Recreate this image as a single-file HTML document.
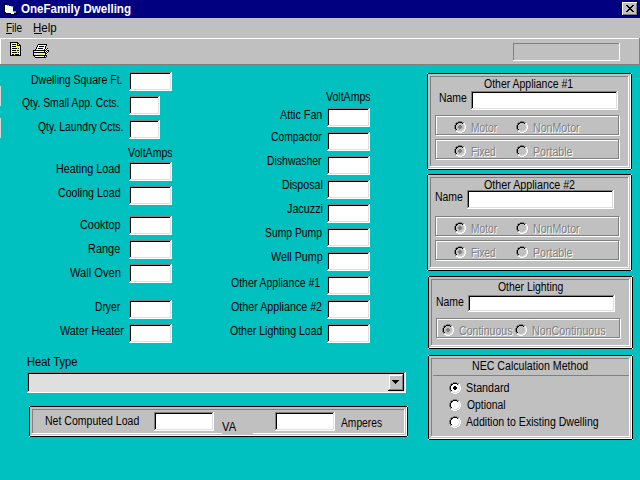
<!DOCTYPE html>
<html><head><meta charset="utf-8"><style>
html,body{margin:0;padding:0;width:640px;height:480px;overflow:hidden;background:#00c0c0}
body>div,body>svg{position:absolute}
</style></head><body>
<div style="left:0px;top:0px;width:640px;height:480px;background:#00c0c0"></div>
<div style="left:0px;top:86px;width:1px;height:20px;background:#d8d8d8"></div><div style="left:0px;top:118px;width:1px;height:20px;background:#d8d8d8"></div>
<div style="left:0px;top:0px;width:640px;height:18px;background:#000080"></div>
<svg style="left:4px;top:4px" width="13" height="11" shape-rendering="crispEdges"><rect x="0" y="0" width="3" height="1" fill="#000"/><rect x="0" y="1" width="1" height="1" fill="#000"/><rect x="1" y="1" width="2" height="1" fill="#fff"/><rect x="3" y="1" width="2" height="1" fill="#00e8e8"/><rect x="5" y="1" width="2" height="1" fill="#000"/><rect x="0" y="2" width="1" height="1" fill="#000"/><rect x="1" y="2" width="6" height="1" fill="#fff"/><rect x="7" y="2" width="2" height="1" fill="#00e8e8"/><rect x="9" y="2" width="1" height="1" fill="#000"/><rect x="0" y="3" width="1" height="1" fill="#000"/><rect x="1" y="3" width="8" height="1" fill="#fff"/><rect x="9" y="3" width="1" height="1" fill="#000"/><rect x="0" y="4" width="1" height="1" fill="#000"/><rect x="1" y="4" width="8" height="1" fill="#fff"/><rect x="9" y="4" width="1" height="1" fill="#000"/><rect x="0" y="5" width="1" height="1" fill="#000"/><rect x="1" y="5" width="8" height="1" fill="#fff"/><rect x="9" y="5" width="1" height="1" fill="#000"/><rect x="0" y="6" width="1" height="1" fill="#000"/><rect x="1" y="6" width="8" height="1" fill="#fff"/><rect x="9" y="6" width="1" height="1" fill="#000"/><rect x="0" y="7" width="1" height="1" fill="#000"/><rect x="1" y="7" width="8" height="1" fill="#fff"/><rect x="9" y="7" width="3" height="1" fill="#a0a0a0"/><rect x="0" y="8" width="2" height="1" fill="#000"/><rect x="2" y="8" width="8" height="1" fill="#fff"/><rect x="10" y="8" width="2" height="1" fill="#a0a0a0"/><rect x="12" y="8" width="1" height="1" fill="#000"/><rect x="2" y="9" width="5" height="1" fill="#000"/><rect x="7" y="9" width="3" height="1" fill="#fff"/><rect x="10" y="9" width="2" height="1" fill="#000"/><rect x="7" y="10" width="3" height="1" fill="#000"/></svg>
<div style="left:622px;top:2px;width:16px;height:14px;background:#c0c0c0"></div><div style="left:622px;top:2px;width:15px;height:1px;background:#fff"></div><div style="left:622px;top:2px;width:1px;height:13px;background:#fff"></div><div style="left:622px;top:15px;width:16px;height:1px;background:#000"></div><div style="left:637px;top:2px;width:1px;height:14px;background:#000"></div><div style="left:623px;top:3px;width:13px;height:1px;background:#c0c0c0"></div><div style="left:623px;top:3px;width:1px;height:11px;background:#c0c0c0"></div><div style="left:623px;top:14px;width:14px;height:1px;background:#808080"></div><div style="left:636px;top:3px;width:1px;height:12px;background:#808080"></div>
<svg style="left:626px;top:5px" width="8" height="7" shape-rendering="crispEdges" fill="#000"><rect x="0" y="0" width="1" height="1"/><rect x="1" y="0" width="1" height="1"/><rect x="6" y="0" width="1" height="1"/><rect x="7" y="0" width="1" height="1"/><rect x="1" y="1" width="1" height="1"/><rect x="2" y="1" width="1" height="1"/><rect x="5" y="1" width="1" height="1"/><rect x="6" y="1" width="1" height="1"/><rect x="2" y="2" width="1" height="1"/><rect x="3" y="2" width="1" height="1"/><rect x="4" y="2" width="1" height="1"/><rect x="5" y="2" width="1" height="1"/><rect x="3" y="3" width="1" height="1"/><rect x="4" y="3" width="1" height="1"/><rect x="2" y="4" width="1" height="1"/><rect x="3" y="4" width="1" height="1"/><rect x="4" y="4" width="1" height="1"/><rect x="5" y="4" width="1" height="1"/><rect x="1" y="5" width="1" height="1"/><rect x="2" y="5" width="1" height="1"/><rect x="5" y="5" width="1" height="1"/><rect x="6" y="5" width="1" height="1"/><rect x="0" y="6" width="1" height="1"/><rect x="1" y="6" width="1" height="1"/><rect x="6" y="6" width="1" height="1"/><rect x="7" y="6" width="1" height="1"/></svg>
<div style="left:0px;top:18px;width:640px;height:20px;background:#c0c0c0"></div>
<div style="left:6px;top:33px;width:6px;height:1px;background:#000"></div>
<div style="left:34px;top:33px;width:8px;height:1px;background:#000"></div>
<div style="left:0px;top:38px;width:640px;height:27px;background:#c0c0c0"></div>
<div style="left:0px;top:38px;width:639px;height:1px;background:#fff"></div>
<div style="left:0px;top:38px;width:1px;height:26px;background:#fff"></div>
<div style="left:0px;top:64px;width:640px;height:1px;background:#808080"></div>
<div style="left:639px;top:38px;width:1px;height:27px;background:#808080"></div>
<div style="left:513px;top:43px;width:106px;height:1px;background:#808080"></div><div style="left:513px;top:43px;width:1px;height:17px;background:#808080"></div><div style="left:513px;top:60px;width:107px;height:1px;background:#fff"></div><div style="left:619px;top:43px;width:1px;height:18px;background:#fff"></div>
<svg style="left:10px;top:42px" width="11" height="14" shape-rendering="crispEdges"><rect x="0" y="0" width="8" height="1" fill="#000"/><rect x="0" y="1" width="1" height="1" fill="#000"/><rect x="1" y="1" width="1" height="1" fill="#ff0"/><rect x="2" y="1" width="1" height="1" fill="#fff"/><rect x="3" y="1" width="1" height="1" fill="#ff0"/><rect x="4" y="1" width="1" height="1" fill="#fff"/><rect x="5" y="1" width="1" height="1" fill="#ff0"/><rect x="6" y="1" width="1" height="1" fill="#fff"/><rect x="7" y="1" width="2" height="1" fill="#000"/><rect x="0" y="2" width="1" height="1" fill="#000"/><rect x="1" y="2" width="1" height="1" fill="#fff"/><rect x="2" y="2" width="4" height="1" fill="#000"/><rect x="6" y="2" width="1" height="1" fill="#ff0"/><rect x="7" y="2" width="1" height="1" fill="#000"/><rect x="8" y="2" width="1" height="1" fill="#fff"/><rect x="9" y="2" width="1" height="1" fill="#000"/><rect x="0" y="3" width="1" height="1" fill="#000"/><rect x="1" y="3" width="1" height="1" fill="#ff0"/><rect x="2" y="3" width="1" height="1" fill="#fff"/><rect x="3" y="3" width="1" height="1" fill="#ff0"/><rect x="4" y="3" width="1" height="1" fill="#fff"/><rect x="5" y="3" width="1" height="1" fill="#ff0"/><rect x="6" y="3" width="1" height="1" fill="#fff"/><rect x="7" y="3" width="4" height="1" fill="#000"/><rect x="0" y="4" width="1" height="1" fill="#000"/><rect x="1" y="4" width="1" height="1" fill="#fff"/><rect x="2" y="4" width="4" height="1" fill="#000"/><rect x="6" y="4" width="1" height="1" fill="#ff0"/><rect x="7" y="4" width="1" height="1" fill="#fff"/><rect x="8" y="4" width="1" height="1" fill="#ff0"/><rect x="9" y="4" width="1" height="1" fill="#fff"/><rect x="10" y="4" width="1" height="1" fill="#000"/><rect x="0" y="5" width="1" height="1" fill="#000"/><rect x="1" y="5" width="1" height="1" fill="#ff0"/><rect x="2" y="5" width="1" height="1" fill="#fff"/><rect x="3" y="5" width="1" height="1" fill="#ff0"/><rect x="4" y="5" width="1" height="1" fill="#fff"/><rect x="5" y="5" width="1" height="1" fill="#ff0"/><rect x="6" y="5" width="1" height="1" fill="#fff"/><rect x="7" y="5" width="1" height="1" fill="#ff0"/><rect x="8" y="5" width="1" height="1" fill="#fff"/><rect x="9" y="5" width="1" height="1" fill="#ff0"/><rect x="10" y="5" width="1" height="1" fill="#000"/><rect x="0" y="6" width="1" height="1" fill="#000"/><rect x="1" y="6" width="1" height="1" fill="#fff"/><rect x="2" y="6" width="5" height="1" fill="#000"/><rect x="7" y="6" width="1" height="1" fill="#ff0"/><rect x="8" y="6" width="1" height="1" fill="#000"/><rect x="9" y="6" width="1" height="1" fill="#fff"/><rect x="10" y="6" width="1" height="1" fill="#000"/><rect x="0" y="7" width="1" height="1" fill="#000"/><rect x="1" y="7" width="1" height="1" fill="#ff0"/><rect x="2" y="7" width="1" height="1" fill="#fff"/><rect x="3" y="7" width="1" height="1" fill="#ff0"/><rect x="4" y="7" width="1" height="1" fill="#fff"/><rect x="5" y="7" width="1" height="1" fill="#ff0"/><rect x="6" y="7" width="1" height="1" fill="#fff"/><rect x="7" y="7" width="1" height="1" fill="#ff0"/><rect x="8" y="7" width="1" height="1" fill="#fff"/><rect x="9" y="7" width="1" height="1" fill="#ff0"/><rect x="10" y="7" width="1" height="1" fill="#000"/><rect x="0" y="8" width="1" height="1" fill="#000"/><rect x="1" y="8" width="1" height="1" fill="#fff"/><rect x="2" y="8" width="4" height="1" fill="#000"/><rect x="6" y="8" width="1" height="1" fill="#ff0"/><rect x="7" y="8" width="2" height="1" fill="#000"/><rect x="9" y="8" width="1" height="1" fill="#fff"/><rect x="10" y="8" width="1" height="1" fill="#000"/><rect x="0" y="9" width="1" height="1" fill="#000"/><rect x="1" y="9" width="1" height="1" fill="#ff0"/><rect x="2" y="9" width="1" height="1" fill="#fff"/><rect x="3" y="9" width="1" height="1" fill="#ff0"/><rect x="4" y="9" width="1" height="1" fill="#fff"/><rect x="5" y="9" width="1" height="1" fill="#ff0"/><rect x="6" y="9" width="1" height="1" fill="#fff"/><rect x="7" y="9" width="1" height="1" fill="#ff0"/><rect x="8" y="9" width="1" height="1" fill="#fff"/><rect x="9" y="9" width="1" height="1" fill="#ff0"/><rect x="10" y="9" width="1" height="1" fill="#000"/><rect x="0" y="10" width="1" height="1" fill="#000"/><rect x="1" y="10" width="1" height="1" fill="#fff"/><rect x="2" y="10" width="5" height="1" fill="#000"/><rect x="7" y="10" width="1" height="1" fill="#ff0"/><rect x="8" y="10" width="1" height="1" fill="#000"/><rect x="9" y="10" width="1" height="1" fill="#fff"/><rect x="10" y="10" width="1" height="1" fill="#000"/><rect x="0" y="11" width="1" height="1" fill="#000"/><rect x="1" y="11" width="1" height="1" fill="#ff0"/><rect x="2" y="11" width="1" height="1" fill="#fff"/><rect x="3" y="11" width="1" height="1" fill="#ff0"/><rect x="4" y="11" width="1" height="1" fill="#fff"/><rect x="5" y="11" width="1" height="1" fill="#ff0"/><rect x="6" y="11" width="1" height="1" fill="#fff"/><rect x="7" y="11" width="1" height="1" fill="#ff0"/><rect x="8" y="11" width="1" height="1" fill="#fff"/><rect x="9" y="11" width="1" height="1" fill="#ff0"/><rect x="10" y="11" width="1" height="1" fill="#000"/><rect x="0" y="12" width="1" height="1" fill="#000"/><rect x="1" y="12" width="1" height="1" fill="#fff"/><rect x="2" y="12" width="2" height="1" fill="#000"/><rect x="4" y="12" width="1" height="1" fill="#ff0"/><rect x="5" y="12" width="4" height="1" fill="#000"/><rect x="9" y="12" width="1" height="1" fill="#fff"/><rect x="10" y="12" width="1" height="1" fill="#000"/><rect x="0" y="13" width="11" height="1" fill="#000"/></svg>
<svg style="left:33px;top:44px" width="16" height="14" shape-rendering="crispEdges"><rect x="5" y="0" width="9" height="1" fill="#000"/><rect x="4" y="1" width="1" height="1" fill="#000"/><rect x="5" y="1" width="8" height="1" fill="#fff"/><rect x="13" y="1" width="1" height="1" fill="#000"/><rect x="4" y="2" width="1" height="1" fill="#000"/><rect x="5" y="2" width="1" height="1" fill="#fff"/><rect x="6" y="2" width="5" height="1" fill="#000"/><rect x="11" y="2" width="1" height="1" fill="#fff"/><rect x="12" y="2" width="1" height="1" fill="#000"/><rect x="3" y="3" width="1" height="1" fill="#000"/><rect x="4" y="3" width="8" height="1" fill="#fff"/><rect x="12" y="3" width="1" height="1" fill="#000"/><rect x="3" y="4" width="1" height="1" fill="#000"/><rect x="4" y="4" width="1" height="1" fill="#fff"/><rect x="5" y="4" width="5" height="1" fill="#000"/><rect x="10" y="4" width="2" height="1" fill="#fff"/><rect x="12" y="4" width="1" height="1" fill="#000"/><rect x="13" y="4" width="1" height="1" fill="#fff"/><rect x="14" y="4" width="1" height="1" fill="#000"/><rect x="2" y="5" width="1" height="1" fill="#000"/><rect x="3" y="5" width="8" height="1" fill="#fff"/><rect x="11" y="5" width="1" height="1" fill="#000"/><rect x="12" y="5" width="1" height="1" fill="#fff"/><rect x="13" y="5" width="1" height="1" fill="#000"/><rect x="14" y="5" width="1" height="1" fill="#fff"/><rect x="0" y="6" width="13" height="1" fill="#000"/><rect x="13" y="6" width="1" height="1" fill="#fff"/><rect x="14" y="6" width="2" height="1" fill="#000"/><rect x="0" y="7" width="1" height="1" fill="#000"/><rect x="1" y="7" width="10" height="1" fill="#fff"/><rect x="11" y="7" width="1" height="1" fill="#000"/><rect x="12" y="7" width="1" height="1" fill="#fff"/><rect x="13" y="7" width="1" height="1" fill="#000"/><rect x="14" y="7" width="1" height="1" fill="#fff"/><rect x="15" y="7" width="1" height="1" fill="#000"/><rect x="0" y="8" width="13" height="1" fill="#000"/><rect x="13" y="8" width="1" height="1" fill="#fff"/><rect x="14" y="8" width="1" height="1" fill="#000"/><rect x="0" y="9" width="1" height="1" fill="#000"/><rect x="1" y="9" width="10" height="1" fill="#e0e0e0"/><rect x="11" y="9" width="1" height="1" fill="#fff"/><rect x="12" y="9" width="2" height="1" fill="#000"/><rect x="14" y="9" width="1" height="1" fill="#fff"/><rect x="0" y="10" width="1" height="1" fill="#000"/><rect x="1" y="10" width="6" height="1" fill="#e0e0e0"/><rect x="7" y="10" width="3" height="1" fill="#ff0"/><rect x="10" y="10" width="1" height="1" fill="#e0e0e0"/><rect x="11" y="10" width="1" height="1" fill="#fff"/><rect x="12" y="10" width="1" height="1" fill="#000"/><rect x="13" y="10" width="1" height="1" fill="#fff"/><rect x="0" y="11" width="14" height="1" fill="#000"/><rect x="1" y="12" width="1" height="1" fill="#000"/><rect x="2" y="12" width="9" height="1" fill="#fff"/><rect x="11" y="12" width="1" height="1" fill="#000"/><rect x="12" y="12" width="1" height="1" fill="#fff"/><rect x="13" y="12" width="1" height="1" fill="#000"/><rect x="2" y="13" width="11" height="1" fill="#000"/></svg>
<div style="left:129px;top:72px;width:43px;height:19px;background:#fff"></div><div style="left:129px;top:72px;width:42px;height:1px;background:#808080"></div><div style="left:129px;top:72px;width:1px;height:18px;background:#808080"></div><div style="left:129px;top:90px;width:43px;height:1px;background:#fff"></div><div style="left:171px;top:72px;width:1px;height:19px;background:#fff"></div><div style="left:130px;top:73px;width:40px;height:1px;background:#000"></div><div style="left:130px;top:73px;width:1px;height:16px;background:#000"></div><div style="left:130px;top:89px;width:41px;height:1px;background:#dfdfdf"></div><div style="left:170px;top:73px;width:1px;height:17px;background:#dfdfdf"></div>
<div style="left:129px;top:96px;width:31px;height:19px;background:#fff"></div><div style="left:129px;top:96px;width:30px;height:1px;background:#808080"></div><div style="left:129px;top:96px;width:1px;height:18px;background:#808080"></div><div style="left:129px;top:114px;width:31px;height:1px;background:#fff"></div><div style="left:159px;top:96px;width:1px;height:19px;background:#fff"></div><div style="left:130px;top:97px;width:28px;height:1px;background:#000"></div><div style="left:130px;top:97px;width:1px;height:16px;background:#000"></div><div style="left:130px;top:113px;width:29px;height:1px;background:#dfdfdf"></div><div style="left:158px;top:97px;width:1px;height:17px;background:#dfdfdf"></div>
<div style="left:129px;top:120px;width:31px;height:19px;background:#fff"></div><div style="left:129px;top:120px;width:30px;height:1px;background:#808080"></div><div style="left:129px;top:120px;width:1px;height:18px;background:#808080"></div><div style="left:129px;top:138px;width:31px;height:1px;background:#fff"></div><div style="left:159px;top:120px;width:1px;height:19px;background:#fff"></div><div style="left:130px;top:121px;width:28px;height:1px;background:#000"></div><div style="left:130px;top:121px;width:1px;height:16px;background:#000"></div><div style="left:130px;top:137px;width:29px;height:1px;background:#dfdfdf"></div><div style="left:158px;top:121px;width:1px;height:17px;background:#dfdfdf"></div>
<div style="left:129px;top:162px;width:43px;height:19px;background:#fff"></div><div style="left:129px;top:162px;width:42px;height:1px;background:#808080"></div><div style="left:129px;top:162px;width:1px;height:18px;background:#808080"></div><div style="left:129px;top:180px;width:43px;height:1px;background:#fff"></div><div style="left:171px;top:162px;width:1px;height:19px;background:#fff"></div><div style="left:130px;top:163px;width:40px;height:1px;background:#000"></div><div style="left:130px;top:163px;width:1px;height:16px;background:#000"></div><div style="left:130px;top:179px;width:41px;height:1px;background:#dfdfdf"></div><div style="left:170px;top:163px;width:1px;height:17px;background:#dfdfdf"></div>
<div style="left:129px;top:186px;width:43px;height:19px;background:#fff"></div><div style="left:129px;top:186px;width:42px;height:1px;background:#808080"></div><div style="left:129px;top:186px;width:1px;height:18px;background:#808080"></div><div style="left:129px;top:204px;width:43px;height:1px;background:#fff"></div><div style="left:171px;top:186px;width:1px;height:19px;background:#fff"></div><div style="left:130px;top:187px;width:40px;height:1px;background:#000"></div><div style="left:130px;top:187px;width:1px;height:16px;background:#000"></div><div style="left:130px;top:203px;width:41px;height:1px;background:#dfdfdf"></div><div style="left:170px;top:187px;width:1px;height:17px;background:#dfdfdf"></div>
<div style="left:129px;top:216px;width:43px;height:19px;background:#fff"></div><div style="left:129px;top:216px;width:42px;height:1px;background:#808080"></div><div style="left:129px;top:216px;width:1px;height:18px;background:#808080"></div><div style="left:129px;top:234px;width:43px;height:1px;background:#fff"></div><div style="left:171px;top:216px;width:1px;height:19px;background:#fff"></div><div style="left:130px;top:217px;width:40px;height:1px;background:#000"></div><div style="left:130px;top:217px;width:1px;height:16px;background:#000"></div><div style="left:130px;top:233px;width:41px;height:1px;background:#dfdfdf"></div><div style="left:170px;top:217px;width:1px;height:17px;background:#dfdfdf"></div>
<div style="left:129px;top:240px;width:43px;height:19px;background:#fff"></div><div style="left:129px;top:240px;width:42px;height:1px;background:#808080"></div><div style="left:129px;top:240px;width:1px;height:18px;background:#808080"></div><div style="left:129px;top:258px;width:43px;height:1px;background:#fff"></div><div style="left:171px;top:240px;width:1px;height:19px;background:#fff"></div><div style="left:130px;top:241px;width:40px;height:1px;background:#000"></div><div style="left:130px;top:241px;width:1px;height:16px;background:#000"></div><div style="left:130px;top:257px;width:41px;height:1px;background:#dfdfdf"></div><div style="left:170px;top:241px;width:1px;height:17px;background:#dfdfdf"></div>
<div style="left:129px;top:264px;width:43px;height:19px;background:#fff"></div><div style="left:129px;top:264px;width:42px;height:1px;background:#808080"></div><div style="left:129px;top:264px;width:1px;height:18px;background:#808080"></div><div style="left:129px;top:282px;width:43px;height:1px;background:#fff"></div><div style="left:171px;top:264px;width:1px;height:19px;background:#fff"></div><div style="left:130px;top:265px;width:40px;height:1px;background:#000"></div><div style="left:130px;top:265px;width:1px;height:16px;background:#000"></div><div style="left:130px;top:281px;width:41px;height:1px;background:#dfdfdf"></div><div style="left:170px;top:265px;width:1px;height:17px;background:#dfdfdf"></div>
<div style="left:129px;top:300px;width:43px;height:19px;background:#fff"></div><div style="left:129px;top:300px;width:42px;height:1px;background:#808080"></div><div style="left:129px;top:300px;width:1px;height:18px;background:#808080"></div><div style="left:129px;top:318px;width:43px;height:1px;background:#fff"></div><div style="left:171px;top:300px;width:1px;height:19px;background:#fff"></div><div style="left:130px;top:301px;width:40px;height:1px;background:#000"></div><div style="left:130px;top:301px;width:1px;height:16px;background:#000"></div><div style="left:130px;top:317px;width:41px;height:1px;background:#dfdfdf"></div><div style="left:170px;top:301px;width:1px;height:17px;background:#dfdfdf"></div>
<div style="left:129px;top:324px;width:43px;height:19px;background:#fff"></div><div style="left:129px;top:324px;width:42px;height:1px;background:#808080"></div><div style="left:129px;top:324px;width:1px;height:18px;background:#808080"></div><div style="left:129px;top:342px;width:43px;height:1px;background:#fff"></div><div style="left:171px;top:324px;width:1px;height:19px;background:#fff"></div><div style="left:130px;top:325px;width:40px;height:1px;background:#000"></div><div style="left:130px;top:325px;width:1px;height:16px;background:#000"></div><div style="left:130px;top:341px;width:41px;height:1px;background:#dfdfdf"></div><div style="left:170px;top:325px;width:1px;height:17px;background:#dfdfdf"></div>
<div style="left:327px;top:108px;width:43px;height:19px;background:#fff"></div><div style="left:327px;top:108px;width:42px;height:1px;background:#808080"></div><div style="left:327px;top:108px;width:1px;height:18px;background:#808080"></div><div style="left:327px;top:126px;width:43px;height:1px;background:#fff"></div><div style="left:369px;top:108px;width:1px;height:19px;background:#fff"></div><div style="left:328px;top:109px;width:40px;height:1px;background:#000"></div><div style="left:328px;top:109px;width:1px;height:16px;background:#000"></div><div style="left:328px;top:125px;width:41px;height:1px;background:#dfdfdf"></div><div style="left:368px;top:109px;width:1px;height:17px;background:#dfdfdf"></div>
<div style="left:327px;top:132px;width:43px;height:19px;background:#fff"></div><div style="left:327px;top:132px;width:42px;height:1px;background:#808080"></div><div style="left:327px;top:132px;width:1px;height:18px;background:#808080"></div><div style="left:327px;top:150px;width:43px;height:1px;background:#fff"></div><div style="left:369px;top:132px;width:1px;height:19px;background:#fff"></div><div style="left:328px;top:133px;width:40px;height:1px;background:#000"></div><div style="left:328px;top:133px;width:1px;height:16px;background:#000"></div><div style="left:328px;top:149px;width:41px;height:1px;background:#dfdfdf"></div><div style="left:368px;top:133px;width:1px;height:17px;background:#dfdfdf"></div>
<div style="left:327px;top:156px;width:43px;height:19px;background:#fff"></div><div style="left:327px;top:156px;width:42px;height:1px;background:#808080"></div><div style="left:327px;top:156px;width:1px;height:18px;background:#808080"></div><div style="left:327px;top:174px;width:43px;height:1px;background:#fff"></div><div style="left:369px;top:156px;width:1px;height:19px;background:#fff"></div><div style="left:328px;top:157px;width:40px;height:1px;background:#000"></div><div style="left:328px;top:157px;width:1px;height:16px;background:#000"></div><div style="left:328px;top:173px;width:41px;height:1px;background:#dfdfdf"></div><div style="left:368px;top:157px;width:1px;height:17px;background:#dfdfdf"></div>
<div style="left:327px;top:180px;width:43px;height:19px;background:#fff"></div><div style="left:327px;top:180px;width:42px;height:1px;background:#808080"></div><div style="left:327px;top:180px;width:1px;height:18px;background:#808080"></div><div style="left:327px;top:198px;width:43px;height:1px;background:#fff"></div><div style="left:369px;top:180px;width:1px;height:19px;background:#fff"></div><div style="left:328px;top:181px;width:40px;height:1px;background:#000"></div><div style="left:328px;top:181px;width:1px;height:16px;background:#000"></div><div style="left:328px;top:197px;width:41px;height:1px;background:#dfdfdf"></div><div style="left:368px;top:181px;width:1px;height:17px;background:#dfdfdf"></div>
<div style="left:327px;top:204px;width:43px;height:19px;background:#fff"></div><div style="left:327px;top:204px;width:42px;height:1px;background:#808080"></div><div style="left:327px;top:204px;width:1px;height:18px;background:#808080"></div><div style="left:327px;top:222px;width:43px;height:1px;background:#fff"></div><div style="left:369px;top:204px;width:1px;height:19px;background:#fff"></div><div style="left:328px;top:205px;width:40px;height:1px;background:#000"></div><div style="left:328px;top:205px;width:1px;height:16px;background:#000"></div><div style="left:328px;top:221px;width:41px;height:1px;background:#dfdfdf"></div><div style="left:368px;top:205px;width:1px;height:17px;background:#dfdfdf"></div>
<div style="left:327px;top:228px;width:43px;height:19px;background:#fff"></div><div style="left:327px;top:228px;width:42px;height:1px;background:#808080"></div><div style="left:327px;top:228px;width:1px;height:18px;background:#808080"></div><div style="left:327px;top:246px;width:43px;height:1px;background:#fff"></div><div style="left:369px;top:228px;width:1px;height:19px;background:#fff"></div><div style="left:328px;top:229px;width:40px;height:1px;background:#000"></div><div style="left:328px;top:229px;width:1px;height:16px;background:#000"></div><div style="left:328px;top:245px;width:41px;height:1px;background:#dfdfdf"></div><div style="left:368px;top:229px;width:1px;height:17px;background:#dfdfdf"></div>
<div style="left:327px;top:252px;width:43px;height:19px;background:#fff"></div><div style="left:327px;top:252px;width:42px;height:1px;background:#808080"></div><div style="left:327px;top:252px;width:1px;height:18px;background:#808080"></div><div style="left:327px;top:270px;width:43px;height:1px;background:#fff"></div><div style="left:369px;top:252px;width:1px;height:19px;background:#fff"></div><div style="left:328px;top:253px;width:40px;height:1px;background:#000"></div><div style="left:328px;top:253px;width:1px;height:16px;background:#000"></div><div style="left:328px;top:269px;width:41px;height:1px;background:#dfdfdf"></div><div style="left:368px;top:253px;width:1px;height:17px;background:#dfdfdf"></div>
<div style="left:327px;top:276px;width:43px;height:19px;background:#fff"></div><div style="left:327px;top:276px;width:42px;height:1px;background:#808080"></div><div style="left:327px;top:276px;width:1px;height:18px;background:#808080"></div><div style="left:327px;top:294px;width:43px;height:1px;background:#fff"></div><div style="left:369px;top:276px;width:1px;height:19px;background:#fff"></div><div style="left:328px;top:277px;width:40px;height:1px;background:#000"></div><div style="left:328px;top:277px;width:1px;height:16px;background:#000"></div><div style="left:328px;top:293px;width:41px;height:1px;background:#dfdfdf"></div><div style="left:368px;top:277px;width:1px;height:17px;background:#dfdfdf"></div>
<div style="left:327px;top:300px;width:43px;height:19px;background:#fff"></div><div style="left:327px;top:300px;width:42px;height:1px;background:#808080"></div><div style="left:327px;top:300px;width:1px;height:18px;background:#808080"></div><div style="left:327px;top:318px;width:43px;height:1px;background:#fff"></div><div style="left:369px;top:300px;width:1px;height:19px;background:#fff"></div><div style="left:328px;top:301px;width:40px;height:1px;background:#000"></div><div style="left:328px;top:301px;width:1px;height:16px;background:#000"></div><div style="left:328px;top:317px;width:41px;height:1px;background:#dfdfdf"></div><div style="left:368px;top:301px;width:1px;height:17px;background:#dfdfdf"></div>
<div style="left:327px;top:324px;width:43px;height:19px;background:#fff"></div><div style="left:327px;top:324px;width:42px;height:1px;background:#808080"></div><div style="left:327px;top:324px;width:1px;height:18px;background:#808080"></div><div style="left:327px;top:342px;width:43px;height:1px;background:#fff"></div><div style="left:369px;top:324px;width:1px;height:19px;background:#fff"></div><div style="left:328px;top:325px;width:40px;height:1px;background:#000"></div><div style="left:328px;top:325px;width:1px;height:16px;background:#000"></div><div style="left:328px;top:341px;width:41px;height:1px;background:#dfdfdf"></div><div style="left:368px;top:325px;width:1px;height:17px;background:#dfdfdf"></div>
<div style="left:27px;top:372px;width:379px;height:21px;background:#dfdfdf"></div><div style="left:27px;top:372px;width:378px;height:1px;background:#808080"></div><div style="left:27px;top:372px;width:1px;height:20px;background:#808080"></div><div style="left:27px;top:392px;width:379px;height:1px;background:#fff"></div><div style="left:405px;top:372px;width:1px;height:21px;background:#fff"></div><div style="left:28px;top:373px;width:376px;height:1px;background:#000"></div><div style="left:28px;top:373px;width:1px;height:18px;background:#000"></div><div style="left:28px;top:391px;width:377px;height:1px;background:#dfdfdf"></div><div style="left:404px;top:373px;width:1px;height:19px;background:#dfdfdf"></div>
<div style="left:388px;top:374px;width:16px;height:17px;background:#c0c0c0"></div><div style="left:388px;top:374px;width:15px;height:1px;background:#dfdfdf"></div><div style="left:388px;top:374px;width:1px;height:16px;background:#dfdfdf"></div><div style="left:388px;top:390px;width:16px;height:1px;background:#000"></div><div style="left:403px;top:374px;width:1px;height:17px;background:#000"></div><div style="left:389px;top:375px;width:13px;height:1px;background:#fff"></div><div style="left:389px;top:375px;width:1px;height:14px;background:#fff"></div><div style="left:389px;top:389px;width:14px;height:1px;background:#808080"></div><div style="left:402px;top:375px;width:1px;height:15px;background:#808080"></div>
<div style="left:392px;top:380px;width:7px;height:1px;background:#000"></div><div style="left:393px;top:381px;width:5px;height:1px;background:#000"></div><div style="left:394px;top:382px;width:3px;height:1px;background:#000"></div><div style="left:395px;top:383px;width:1px;height:1px;background:#000"></div>
<div style="left:29px;top:406px;width:379px;height:31px;background:#c0c0c0"></div><div style="left:29px;top:406px;width:378px;height:1px;background:#000"></div><div style="left:29px;top:406px;width:1px;height:30px;background:#000"></div><div style="left:29px;top:436px;width:379px;height:1px;background:#000"></div><div style="left:407px;top:406px;width:1px;height:31px;background:#000"></div><div style="left:30px;top:407px;width:376px;height:1px;background:#c0c0c0"></div><div style="left:30px;top:407px;width:1px;height:28px;background:#c0c0c0"></div><div style="left:30px;top:435px;width:377px;height:1px;background:#fff"></div><div style="left:406px;top:407px;width:1px;height:29px;background:#fff"></div><div style="left:32px;top:409px;width:372px;height:1px;background:#808080"></div><div style="left:32px;top:409px;width:1px;height:24px;background:#808080"></div><div style="left:32px;top:433px;width:373px;height:1px;background:#fff"></div><div style="left:404px;top:409px;width:1px;height:25px;background:#fff"></div><div style="left:29px;top:406px;width:1px;height:1px;background:#e8e8e8"></div><div style="left:407px;top:406px;width:1px;height:1px;background:#e8e8e8"></div><div style="left:29px;top:436px;width:1px;height:1px;background:#e8e8e8"></div><div style="left:407px;top:436px;width:1px;height:1px;background:#e8e8e8"></div>
<div style="left:154px;top:412px;width:60px;height:19px;background:#fff"></div><div style="left:154px;top:412px;width:59px;height:1px;background:#808080"></div><div style="left:154px;top:412px;width:1px;height:18px;background:#808080"></div><div style="left:154px;top:430px;width:60px;height:1px;background:#fff"></div><div style="left:213px;top:412px;width:1px;height:19px;background:#fff"></div><div style="left:155px;top:413px;width:57px;height:1px;background:#000"></div><div style="left:155px;top:413px;width:1px;height:16px;background:#000"></div><div style="left:155px;top:429px;width:58px;height:1px;background:#dfdfdf"></div><div style="left:212px;top:413px;width:1px;height:17px;background:#dfdfdf"></div>
<div style="left:275px;top:412px;width:60px;height:19px;background:#fff"></div><div style="left:275px;top:412px;width:59px;height:1px;background:#808080"></div><div style="left:275px;top:412px;width:1px;height:18px;background:#808080"></div><div style="left:275px;top:430px;width:60px;height:1px;background:#fff"></div><div style="left:334px;top:412px;width:1px;height:19px;background:#fff"></div><div style="left:276px;top:413px;width:57px;height:1px;background:#000"></div><div style="left:276px;top:413px;width:1px;height:16px;background:#000"></div><div style="left:276px;top:429px;width:58px;height:1px;background:#dfdfdf"></div><div style="left:333px;top:413px;width:1px;height:17px;background:#dfdfdf"></div>
<div style="left:222px;top:420px;width:31px;height:14px;background:#c0c0c0"></div>
<div style="left:427px;top:73px;width:205px;height:97px;background:#c0c0c0"></div><div style="left:427px;top:73px;width:204px;height:1px;background:#000"></div><div style="left:427px;top:73px;width:1px;height:96px;background:#000"></div><div style="left:427px;top:169px;width:205px;height:1px;background:#000"></div><div style="left:631px;top:73px;width:1px;height:97px;background:#000"></div><div style="left:428px;top:74px;width:202px;height:1px;background:#c0c0c0"></div><div style="left:428px;top:74px;width:1px;height:94px;background:#c0c0c0"></div><div style="left:428px;top:168px;width:203px;height:1px;background:#fff"></div><div style="left:630px;top:74px;width:1px;height:95px;background:#fff"></div><div style="left:430px;top:76px;width:198px;height:1px;background:#808080"></div><div style="left:430px;top:76px;width:1px;height:90px;background:#808080"></div><div style="left:430px;top:166px;width:199px;height:1px;background:#fff"></div><div style="left:628px;top:76px;width:1px;height:91px;background:#fff"></div><div style="left:427px;top:73px;width:1px;height:1px;background:#e8e8e8"></div><div style="left:631px;top:73px;width:1px;height:1px;background:#e8e8e8"></div><div style="left:427px;top:169px;width:1px;height:1px;background:#e8e8e8"></div><div style="left:631px;top:169px;width:1px;height:1px;background:#e8e8e8"></div>
<div style="left:471px;top:91px;width:147px;height:19px;background:#fff"></div><div style="left:471px;top:91px;width:146px;height:1px;background:#808080"></div><div style="left:471px;top:91px;width:1px;height:18px;background:#808080"></div><div style="left:471px;top:109px;width:147px;height:1px;background:#fff"></div><div style="left:617px;top:91px;width:1px;height:19px;background:#fff"></div><div style="left:472px;top:92px;width:144px;height:1px;background:#000"></div><div style="left:472px;top:92px;width:1px;height:16px;background:#000"></div><div style="left:472px;top:108px;width:145px;height:1px;background:#dfdfdf"></div><div style="left:616px;top:92px;width:1px;height:17px;background:#dfdfdf"></div>
<div style="left:436px;top:116px;width:184px;height:1px;background:#fff"></div><div style="left:436px;top:135px;width:184px;height:1px;background:#fff"></div><div style="left:436px;top:116px;width:1px;height:20px;background:#fff"></div><div style="left:619px;top:116px;width:1px;height:20px;background:#fff"></div><div style="left:435px;top:115px;width:184px;height:1px;background:#808080"></div><div style="left:435px;top:134px;width:184px;height:1px;background:#808080"></div><div style="left:435px;top:115px;width:1px;height:20px;background:#808080"></div><div style="left:618px;top:115px;width:1px;height:20px;background:#808080"></div>
<div style="left:436px;top:140px;width:184px;height:1px;background:#fff"></div><div style="left:436px;top:159px;width:184px;height:1px;background:#fff"></div><div style="left:436px;top:140px;width:1px;height:20px;background:#fff"></div><div style="left:619px;top:140px;width:1px;height:20px;background:#fff"></div><div style="left:435px;top:139px;width:184px;height:1px;background:#808080"></div><div style="left:435px;top:158px;width:184px;height:1px;background:#808080"></div><div style="left:435px;top:139px;width:1px;height:20px;background:#808080"></div><div style="left:618px;top:139px;width:1px;height:20px;background:#808080"></div>
<svg style="left:454px;top:121px" width="12" height="12" shape-rendering="crispEdges"><rect x="4" y="0" width="4" height="1" fill="#808080"/><rect x="2" y="1" width="2" height="1" fill="#808080"/><rect x="4" y="1" width="4" height="1" fill="#000"/><rect x="8" y="1" width="2" height="1" fill="#808080"/><rect x="1" y="2" width="1" height="1" fill="#808080"/><rect x="2" y="2" width="2" height="1" fill="#000"/><rect x="4" y="2" width="4" height="1" fill="#c0c0c0"/><rect x="8" y="2" width="1" height="1" fill="#000"/><rect x="9" y="2" width="1" height="1" fill="#dfdfdf"/><rect x="10" y="2" width="1" height="1" fill="#fff"/><rect x="1" y="3" width="1" height="1" fill="#808080"/><rect x="2" y="3" width="1" height="1" fill="#000"/><rect x="3" y="3" width="6" height="1" fill="#c0c0c0"/><rect x="9" y="3" width="1" height="1" fill="#dfdfdf"/><rect x="10" y="3" width="1" height="1" fill="#fff"/><rect x="0" y="4" width="1" height="1" fill="#808080"/><rect x="1" y="4" width="1" height="1" fill="#000"/><rect x="2" y="4" width="3" height="1" fill="#c0c0c0"/><rect x="5" y="4" width="2" height="1" fill="#808080"/><rect x="7" y="4" width="3" height="1" fill="#c0c0c0"/><rect x="10" y="4" width="1" height="1" fill="#dfdfdf"/><rect x="11" y="4" width="1" height="1" fill="#fff"/><rect x="0" y="5" width="1" height="1" fill="#808080"/><rect x="1" y="5" width="1" height="1" fill="#000"/><rect x="2" y="5" width="2" height="1" fill="#c0c0c0"/><rect x="4" y="5" width="4" height="1" fill="#808080"/><rect x="8" y="5" width="2" height="1" fill="#c0c0c0"/><rect x="10" y="5" width="1" height="1" fill="#dfdfdf"/><rect x="11" y="5" width="1" height="1" fill="#fff"/><rect x="0" y="6" width="1" height="1" fill="#808080"/><rect x="1" y="6" width="1" height="1" fill="#000"/><rect x="2" y="6" width="2" height="1" fill="#c0c0c0"/><rect x="4" y="6" width="4" height="1" fill="#808080"/><rect x="8" y="6" width="2" height="1" fill="#c0c0c0"/><rect x="10" y="6" width="1" height="1" fill="#dfdfdf"/><rect x="11" y="6" width="1" height="1" fill="#fff"/><rect x="0" y="7" width="1" height="1" fill="#808080"/><rect x="1" y="7" width="1" height="1" fill="#000"/><rect x="2" y="7" width="3" height="1" fill="#c0c0c0"/><rect x="5" y="7" width="2" height="1" fill="#808080"/><rect x="7" y="7" width="3" height="1" fill="#c0c0c0"/><rect x="10" y="7" width="1" height="1" fill="#dfdfdf"/><rect x="11" y="7" width="1" height="1" fill="#fff"/><rect x="1" y="8" width="1" height="1" fill="#808080"/><rect x="2" y="8" width="1" height="1" fill="#000"/><rect x="3" y="8" width="6" height="1" fill="#c0c0c0"/><rect x="9" y="8" width="1" height="1" fill="#dfdfdf"/><rect x="10" y="8" width="1" height="1" fill="#fff"/><rect x="1" y="9" width="1" height="1" fill="#808080"/><rect x="2" y="9" width="2" height="1" fill="#dfdfdf"/><rect x="4" y="9" width="4" height="1" fill="#c0c0c0"/><rect x="8" y="9" width="2" height="1" fill="#dfdfdf"/><rect x="10" y="9" width="1" height="1" fill="#fff"/><rect x="2" y="10" width="2" height="1" fill="#fff"/><rect x="4" y="10" width="4" height="1" fill="#dfdfdf"/><rect x="8" y="10" width="2" height="1" fill="#fff"/><rect x="4" y="11" width="4" height="1" fill="#fff"/></svg>
<svg style="left:516px;top:121px" width="12" height="12" shape-rendering="crispEdges"><rect x="4" y="0" width="4" height="1" fill="#808080"/><rect x="2" y="1" width="2" height="1" fill="#808080"/><rect x="4" y="1" width="4" height="1" fill="#000"/><rect x="8" y="1" width="2" height="1" fill="#808080"/><rect x="1" y="2" width="1" height="1" fill="#808080"/><rect x="2" y="2" width="2" height="1" fill="#000"/><rect x="4" y="2" width="4" height="1" fill="#c0c0c0"/><rect x="8" y="2" width="1" height="1" fill="#000"/><rect x="9" y="2" width="1" height="1" fill="#dfdfdf"/><rect x="10" y="2" width="1" height="1" fill="#fff"/><rect x="1" y="3" width="1" height="1" fill="#808080"/><rect x="2" y="3" width="1" height="1" fill="#000"/><rect x="3" y="3" width="6" height="1" fill="#c0c0c0"/><rect x="9" y="3" width="1" height="1" fill="#dfdfdf"/><rect x="10" y="3" width="1" height="1" fill="#fff"/><rect x="0" y="4" width="1" height="1" fill="#808080"/><rect x="1" y="4" width="1" height="1" fill="#000"/><rect x="2" y="4" width="8" height="1" fill="#c0c0c0"/><rect x="10" y="4" width="1" height="1" fill="#dfdfdf"/><rect x="11" y="4" width="1" height="1" fill="#fff"/><rect x="0" y="5" width="1" height="1" fill="#808080"/><rect x="1" y="5" width="1" height="1" fill="#000"/><rect x="2" y="5" width="8" height="1" fill="#c0c0c0"/><rect x="10" y="5" width="1" height="1" fill="#dfdfdf"/><rect x="11" y="5" width="1" height="1" fill="#fff"/><rect x="0" y="6" width="1" height="1" fill="#808080"/><rect x="1" y="6" width="1" height="1" fill="#000"/><rect x="2" y="6" width="8" height="1" fill="#c0c0c0"/><rect x="10" y="6" width="1" height="1" fill="#dfdfdf"/><rect x="11" y="6" width="1" height="1" fill="#fff"/><rect x="0" y="7" width="1" height="1" fill="#808080"/><rect x="1" y="7" width="1" height="1" fill="#000"/><rect x="2" y="7" width="8" height="1" fill="#c0c0c0"/><rect x="10" y="7" width="1" height="1" fill="#dfdfdf"/><rect x="11" y="7" width="1" height="1" fill="#fff"/><rect x="1" y="8" width="1" height="1" fill="#808080"/><rect x="2" y="8" width="1" height="1" fill="#000"/><rect x="3" y="8" width="6" height="1" fill="#c0c0c0"/><rect x="9" y="8" width="1" height="1" fill="#dfdfdf"/><rect x="10" y="8" width="1" height="1" fill="#fff"/><rect x="1" y="9" width="1" height="1" fill="#808080"/><rect x="2" y="9" width="2" height="1" fill="#dfdfdf"/><rect x="4" y="9" width="4" height="1" fill="#c0c0c0"/><rect x="8" y="9" width="2" height="1" fill="#dfdfdf"/><rect x="10" y="9" width="1" height="1" fill="#fff"/><rect x="2" y="10" width="2" height="1" fill="#fff"/><rect x="4" y="10" width="4" height="1" fill="#dfdfdf"/><rect x="8" y="10" width="2" height="1" fill="#fff"/><rect x="4" y="11" width="4" height="1" fill="#fff"/></svg>
<svg style="left:454px;top:145px" width="12" height="12" shape-rendering="crispEdges"><rect x="4" y="0" width="4" height="1" fill="#808080"/><rect x="2" y="1" width="2" height="1" fill="#808080"/><rect x="4" y="1" width="4" height="1" fill="#000"/><rect x="8" y="1" width="2" height="1" fill="#808080"/><rect x="1" y="2" width="1" height="1" fill="#808080"/><rect x="2" y="2" width="2" height="1" fill="#000"/><rect x="4" y="2" width="4" height="1" fill="#c0c0c0"/><rect x="8" y="2" width="1" height="1" fill="#000"/><rect x="9" y="2" width="1" height="1" fill="#dfdfdf"/><rect x="10" y="2" width="1" height="1" fill="#fff"/><rect x="1" y="3" width="1" height="1" fill="#808080"/><rect x="2" y="3" width="1" height="1" fill="#000"/><rect x="3" y="3" width="6" height="1" fill="#c0c0c0"/><rect x="9" y="3" width="1" height="1" fill="#dfdfdf"/><rect x="10" y="3" width="1" height="1" fill="#fff"/><rect x="0" y="4" width="1" height="1" fill="#808080"/><rect x="1" y="4" width="1" height="1" fill="#000"/><rect x="2" y="4" width="3" height="1" fill="#c0c0c0"/><rect x="5" y="4" width="2" height="1" fill="#808080"/><rect x="7" y="4" width="3" height="1" fill="#c0c0c0"/><rect x="10" y="4" width="1" height="1" fill="#dfdfdf"/><rect x="11" y="4" width="1" height="1" fill="#fff"/><rect x="0" y="5" width="1" height="1" fill="#808080"/><rect x="1" y="5" width="1" height="1" fill="#000"/><rect x="2" y="5" width="2" height="1" fill="#c0c0c0"/><rect x="4" y="5" width="4" height="1" fill="#808080"/><rect x="8" y="5" width="2" height="1" fill="#c0c0c0"/><rect x="10" y="5" width="1" height="1" fill="#dfdfdf"/><rect x="11" y="5" width="1" height="1" fill="#fff"/><rect x="0" y="6" width="1" height="1" fill="#808080"/><rect x="1" y="6" width="1" height="1" fill="#000"/><rect x="2" y="6" width="2" height="1" fill="#c0c0c0"/><rect x="4" y="6" width="4" height="1" fill="#808080"/><rect x="8" y="6" width="2" height="1" fill="#c0c0c0"/><rect x="10" y="6" width="1" height="1" fill="#dfdfdf"/><rect x="11" y="6" width="1" height="1" fill="#fff"/><rect x="0" y="7" width="1" height="1" fill="#808080"/><rect x="1" y="7" width="1" height="1" fill="#000"/><rect x="2" y="7" width="3" height="1" fill="#c0c0c0"/><rect x="5" y="7" width="2" height="1" fill="#808080"/><rect x="7" y="7" width="3" height="1" fill="#c0c0c0"/><rect x="10" y="7" width="1" height="1" fill="#dfdfdf"/><rect x="11" y="7" width="1" height="1" fill="#fff"/><rect x="1" y="8" width="1" height="1" fill="#808080"/><rect x="2" y="8" width="1" height="1" fill="#000"/><rect x="3" y="8" width="6" height="1" fill="#c0c0c0"/><rect x="9" y="8" width="1" height="1" fill="#dfdfdf"/><rect x="10" y="8" width="1" height="1" fill="#fff"/><rect x="1" y="9" width="1" height="1" fill="#808080"/><rect x="2" y="9" width="2" height="1" fill="#dfdfdf"/><rect x="4" y="9" width="4" height="1" fill="#c0c0c0"/><rect x="8" y="9" width="2" height="1" fill="#dfdfdf"/><rect x="10" y="9" width="1" height="1" fill="#fff"/><rect x="2" y="10" width="2" height="1" fill="#fff"/><rect x="4" y="10" width="4" height="1" fill="#dfdfdf"/><rect x="8" y="10" width="2" height="1" fill="#fff"/><rect x="4" y="11" width="4" height="1" fill="#fff"/></svg>
<svg style="left:516px;top:145px" width="12" height="12" shape-rendering="crispEdges"><rect x="4" y="0" width="4" height="1" fill="#808080"/><rect x="2" y="1" width="2" height="1" fill="#808080"/><rect x="4" y="1" width="4" height="1" fill="#000"/><rect x="8" y="1" width="2" height="1" fill="#808080"/><rect x="1" y="2" width="1" height="1" fill="#808080"/><rect x="2" y="2" width="2" height="1" fill="#000"/><rect x="4" y="2" width="4" height="1" fill="#c0c0c0"/><rect x="8" y="2" width="1" height="1" fill="#000"/><rect x="9" y="2" width="1" height="1" fill="#dfdfdf"/><rect x="10" y="2" width="1" height="1" fill="#fff"/><rect x="1" y="3" width="1" height="1" fill="#808080"/><rect x="2" y="3" width="1" height="1" fill="#000"/><rect x="3" y="3" width="6" height="1" fill="#c0c0c0"/><rect x="9" y="3" width="1" height="1" fill="#dfdfdf"/><rect x="10" y="3" width="1" height="1" fill="#fff"/><rect x="0" y="4" width="1" height="1" fill="#808080"/><rect x="1" y="4" width="1" height="1" fill="#000"/><rect x="2" y="4" width="8" height="1" fill="#c0c0c0"/><rect x="10" y="4" width="1" height="1" fill="#dfdfdf"/><rect x="11" y="4" width="1" height="1" fill="#fff"/><rect x="0" y="5" width="1" height="1" fill="#808080"/><rect x="1" y="5" width="1" height="1" fill="#000"/><rect x="2" y="5" width="8" height="1" fill="#c0c0c0"/><rect x="10" y="5" width="1" height="1" fill="#dfdfdf"/><rect x="11" y="5" width="1" height="1" fill="#fff"/><rect x="0" y="6" width="1" height="1" fill="#808080"/><rect x="1" y="6" width="1" height="1" fill="#000"/><rect x="2" y="6" width="8" height="1" fill="#c0c0c0"/><rect x="10" y="6" width="1" height="1" fill="#dfdfdf"/><rect x="11" y="6" width="1" height="1" fill="#fff"/><rect x="0" y="7" width="1" height="1" fill="#808080"/><rect x="1" y="7" width="1" height="1" fill="#000"/><rect x="2" y="7" width="8" height="1" fill="#c0c0c0"/><rect x="10" y="7" width="1" height="1" fill="#dfdfdf"/><rect x="11" y="7" width="1" height="1" fill="#fff"/><rect x="1" y="8" width="1" height="1" fill="#808080"/><rect x="2" y="8" width="1" height="1" fill="#000"/><rect x="3" y="8" width="6" height="1" fill="#c0c0c0"/><rect x="9" y="8" width="1" height="1" fill="#dfdfdf"/><rect x="10" y="8" width="1" height="1" fill="#fff"/><rect x="1" y="9" width="1" height="1" fill="#808080"/><rect x="2" y="9" width="2" height="1" fill="#dfdfdf"/><rect x="4" y="9" width="4" height="1" fill="#c0c0c0"/><rect x="8" y="9" width="2" height="1" fill="#dfdfdf"/><rect x="10" y="9" width="1" height="1" fill="#fff"/><rect x="2" y="10" width="2" height="1" fill="#fff"/><rect x="4" y="10" width="4" height="1" fill="#dfdfdf"/><rect x="8" y="10" width="2" height="1" fill="#fff"/><rect x="4" y="11" width="4" height="1" fill="#fff"/></svg>
<div style="left:427px;top:174px;width:205px;height:97px;background:#c0c0c0"></div><div style="left:427px;top:174px;width:204px;height:1px;background:#000"></div><div style="left:427px;top:174px;width:1px;height:96px;background:#000"></div><div style="left:427px;top:270px;width:205px;height:1px;background:#000"></div><div style="left:631px;top:174px;width:1px;height:97px;background:#000"></div><div style="left:428px;top:175px;width:202px;height:1px;background:#c0c0c0"></div><div style="left:428px;top:175px;width:1px;height:94px;background:#c0c0c0"></div><div style="left:428px;top:269px;width:203px;height:1px;background:#fff"></div><div style="left:630px;top:175px;width:1px;height:95px;background:#fff"></div><div style="left:430px;top:177px;width:198px;height:1px;background:#808080"></div><div style="left:430px;top:177px;width:1px;height:90px;background:#808080"></div><div style="left:430px;top:267px;width:199px;height:1px;background:#fff"></div><div style="left:628px;top:177px;width:1px;height:91px;background:#fff"></div><div style="left:427px;top:174px;width:1px;height:1px;background:#e8e8e8"></div><div style="left:631px;top:174px;width:1px;height:1px;background:#e8e8e8"></div><div style="left:427px;top:270px;width:1px;height:1px;background:#e8e8e8"></div><div style="left:631px;top:270px;width:1px;height:1px;background:#e8e8e8"></div>
<div style="left:467px;top:190px;width:147px;height:19px;background:#fff"></div><div style="left:467px;top:190px;width:146px;height:1px;background:#808080"></div><div style="left:467px;top:190px;width:1px;height:18px;background:#808080"></div><div style="left:467px;top:208px;width:147px;height:1px;background:#fff"></div><div style="left:613px;top:190px;width:1px;height:19px;background:#fff"></div><div style="left:468px;top:191px;width:144px;height:1px;background:#000"></div><div style="left:468px;top:191px;width:1px;height:16px;background:#000"></div><div style="left:468px;top:207px;width:145px;height:1px;background:#dfdfdf"></div><div style="left:612px;top:191px;width:1px;height:17px;background:#dfdfdf"></div>
<div style="left:436px;top:217px;width:184px;height:1px;background:#fff"></div><div style="left:436px;top:236px;width:184px;height:1px;background:#fff"></div><div style="left:436px;top:217px;width:1px;height:20px;background:#fff"></div><div style="left:619px;top:217px;width:1px;height:20px;background:#fff"></div><div style="left:435px;top:216px;width:184px;height:1px;background:#808080"></div><div style="left:435px;top:235px;width:184px;height:1px;background:#808080"></div><div style="left:435px;top:216px;width:1px;height:20px;background:#808080"></div><div style="left:618px;top:216px;width:1px;height:20px;background:#808080"></div>
<div style="left:436px;top:241px;width:184px;height:1px;background:#fff"></div><div style="left:436px;top:260px;width:184px;height:1px;background:#fff"></div><div style="left:436px;top:241px;width:1px;height:20px;background:#fff"></div><div style="left:619px;top:241px;width:1px;height:20px;background:#fff"></div><div style="left:435px;top:240px;width:184px;height:1px;background:#808080"></div><div style="left:435px;top:259px;width:184px;height:1px;background:#808080"></div><div style="left:435px;top:240px;width:1px;height:20px;background:#808080"></div><div style="left:618px;top:240px;width:1px;height:20px;background:#808080"></div>
<svg style="left:454px;top:222px" width="12" height="12" shape-rendering="crispEdges"><rect x="4" y="0" width="4" height="1" fill="#808080"/><rect x="2" y="1" width="2" height="1" fill="#808080"/><rect x="4" y="1" width="4" height="1" fill="#000"/><rect x="8" y="1" width="2" height="1" fill="#808080"/><rect x="1" y="2" width="1" height="1" fill="#808080"/><rect x="2" y="2" width="2" height="1" fill="#000"/><rect x="4" y="2" width="4" height="1" fill="#c0c0c0"/><rect x="8" y="2" width="1" height="1" fill="#000"/><rect x="9" y="2" width="1" height="1" fill="#dfdfdf"/><rect x="10" y="2" width="1" height="1" fill="#fff"/><rect x="1" y="3" width="1" height="1" fill="#808080"/><rect x="2" y="3" width="1" height="1" fill="#000"/><rect x="3" y="3" width="6" height="1" fill="#c0c0c0"/><rect x="9" y="3" width="1" height="1" fill="#dfdfdf"/><rect x="10" y="3" width="1" height="1" fill="#fff"/><rect x="0" y="4" width="1" height="1" fill="#808080"/><rect x="1" y="4" width="1" height="1" fill="#000"/><rect x="2" y="4" width="3" height="1" fill="#c0c0c0"/><rect x="5" y="4" width="2" height="1" fill="#808080"/><rect x="7" y="4" width="3" height="1" fill="#c0c0c0"/><rect x="10" y="4" width="1" height="1" fill="#dfdfdf"/><rect x="11" y="4" width="1" height="1" fill="#fff"/><rect x="0" y="5" width="1" height="1" fill="#808080"/><rect x="1" y="5" width="1" height="1" fill="#000"/><rect x="2" y="5" width="2" height="1" fill="#c0c0c0"/><rect x="4" y="5" width="4" height="1" fill="#808080"/><rect x="8" y="5" width="2" height="1" fill="#c0c0c0"/><rect x="10" y="5" width="1" height="1" fill="#dfdfdf"/><rect x="11" y="5" width="1" height="1" fill="#fff"/><rect x="0" y="6" width="1" height="1" fill="#808080"/><rect x="1" y="6" width="1" height="1" fill="#000"/><rect x="2" y="6" width="2" height="1" fill="#c0c0c0"/><rect x="4" y="6" width="4" height="1" fill="#808080"/><rect x="8" y="6" width="2" height="1" fill="#c0c0c0"/><rect x="10" y="6" width="1" height="1" fill="#dfdfdf"/><rect x="11" y="6" width="1" height="1" fill="#fff"/><rect x="0" y="7" width="1" height="1" fill="#808080"/><rect x="1" y="7" width="1" height="1" fill="#000"/><rect x="2" y="7" width="3" height="1" fill="#c0c0c0"/><rect x="5" y="7" width="2" height="1" fill="#808080"/><rect x="7" y="7" width="3" height="1" fill="#c0c0c0"/><rect x="10" y="7" width="1" height="1" fill="#dfdfdf"/><rect x="11" y="7" width="1" height="1" fill="#fff"/><rect x="1" y="8" width="1" height="1" fill="#808080"/><rect x="2" y="8" width="1" height="1" fill="#000"/><rect x="3" y="8" width="6" height="1" fill="#c0c0c0"/><rect x="9" y="8" width="1" height="1" fill="#dfdfdf"/><rect x="10" y="8" width="1" height="1" fill="#fff"/><rect x="1" y="9" width="1" height="1" fill="#808080"/><rect x="2" y="9" width="2" height="1" fill="#dfdfdf"/><rect x="4" y="9" width="4" height="1" fill="#c0c0c0"/><rect x="8" y="9" width="2" height="1" fill="#dfdfdf"/><rect x="10" y="9" width="1" height="1" fill="#fff"/><rect x="2" y="10" width="2" height="1" fill="#fff"/><rect x="4" y="10" width="4" height="1" fill="#dfdfdf"/><rect x="8" y="10" width="2" height="1" fill="#fff"/><rect x="4" y="11" width="4" height="1" fill="#fff"/></svg>
<svg style="left:516px;top:222px" width="12" height="12" shape-rendering="crispEdges"><rect x="4" y="0" width="4" height="1" fill="#808080"/><rect x="2" y="1" width="2" height="1" fill="#808080"/><rect x="4" y="1" width="4" height="1" fill="#000"/><rect x="8" y="1" width="2" height="1" fill="#808080"/><rect x="1" y="2" width="1" height="1" fill="#808080"/><rect x="2" y="2" width="2" height="1" fill="#000"/><rect x="4" y="2" width="4" height="1" fill="#c0c0c0"/><rect x="8" y="2" width="1" height="1" fill="#000"/><rect x="9" y="2" width="1" height="1" fill="#dfdfdf"/><rect x="10" y="2" width="1" height="1" fill="#fff"/><rect x="1" y="3" width="1" height="1" fill="#808080"/><rect x="2" y="3" width="1" height="1" fill="#000"/><rect x="3" y="3" width="6" height="1" fill="#c0c0c0"/><rect x="9" y="3" width="1" height="1" fill="#dfdfdf"/><rect x="10" y="3" width="1" height="1" fill="#fff"/><rect x="0" y="4" width="1" height="1" fill="#808080"/><rect x="1" y="4" width="1" height="1" fill="#000"/><rect x="2" y="4" width="8" height="1" fill="#c0c0c0"/><rect x="10" y="4" width="1" height="1" fill="#dfdfdf"/><rect x="11" y="4" width="1" height="1" fill="#fff"/><rect x="0" y="5" width="1" height="1" fill="#808080"/><rect x="1" y="5" width="1" height="1" fill="#000"/><rect x="2" y="5" width="8" height="1" fill="#c0c0c0"/><rect x="10" y="5" width="1" height="1" fill="#dfdfdf"/><rect x="11" y="5" width="1" height="1" fill="#fff"/><rect x="0" y="6" width="1" height="1" fill="#808080"/><rect x="1" y="6" width="1" height="1" fill="#000"/><rect x="2" y="6" width="8" height="1" fill="#c0c0c0"/><rect x="10" y="6" width="1" height="1" fill="#dfdfdf"/><rect x="11" y="6" width="1" height="1" fill="#fff"/><rect x="0" y="7" width="1" height="1" fill="#808080"/><rect x="1" y="7" width="1" height="1" fill="#000"/><rect x="2" y="7" width="8" height="1" fill="#c0c0c0"/><rect x="10" y="7" width="1" height="1" fill="#dfdfdf"/><rect x="11" y="7" width="1" height="1" fill="#fff"/><rect x="1" y="8" width="1" height="1" fill="#808080"/><rect x="2" y="8" width="1" height="1" fill="#000"/><rect x="3" y="8" width="6" height="1" fill="#c0c0c0"/><rect x="9" y="8" width="1" height="1" fill="#dfdfdf"/><rect x="10" y="8" width="1" height="1" fill="#fff"/><rect x="1" y="9" width="1" height="1" fill="#808080"/><rect x="2" y="9" width="2" height="1" fill="#dfdfdf"/><rect x="4" y="9" width="4" height="1" fill="#c0c0c0"/><rect x="8" y="9" width="2" height="1" fill="#dfdfdf"/><rect x="10" y="9" width="1" height="1" fill="#fff"/><rect x="2" y="10" width="2" height="1" fill="#fff"/><rect x="4" y="10" width="4" height="1" fill="#dfdfdf"/><rect x="8" y="10" width="2" height="1" fill="#fff"/><rect x="4" y="11" width="4" height="1" fill="#fff"/></svg>
<svg style="left:454px;top:246px" width="12" height="12" shape-rendering="crispEdges"><rect x="4" y="0" width="4" height="1" fill="#808080"/><rect x="2" y="1" width="2" height="1" fill="#808080"/><rect x="4" y="1" width="4" height="1" fill="#000"/><rect x="8" y="1" width="2" height="1" fill="#808080"/><rect x="1" y="2" width="1" height="1" fill="#808080"/><rect x="2" y="2" width="2" height="1" fill="#000"/><rect x="4" y="2" width="4" height="1" fill="#c0c0c0"/><rect x="8" y="2" width="1" height="1" fill="#000"/><rect x="9" y="2" width="1" height="1" fill="#dfdfdf"/><rect x="10" y="2" width="1" height="1" fill="#fff"/><rect x="1" y="3" width="1" height="1" fill="#808080"/><rect x="2" y="3" width="1" height="1" fill="#000"/><rect x="3" y="3" width="6" height="1" fill="#c0c0c0"/><rect x="9" y="3" width="1" height="1" fill="#dfdfdf"/><rect x="10" y="3" width="1" height="1" fill="#fff"/><rect x="0" y="4" width="1" height="1" fill="#808080"/><rect x="1" y="4" width="1" height="1" fill="#000"/><rect x="2" y="4" width="3" height="1" fill="#c0c0c0"/><rect x="5" y="4" width="2" height="1" fill="#808080"/><rect x="7" y="4" width="3" height="1" fill="#c0c0c0"/><rect x="10" y="4" width="1" height="1" fill="#dfdfdf"/><rect x="11" y="4" width="1" height="1" fill="#fff"/><rect x="0" y="5" width="1" height="1" fill="#808080"/><rect x="1" y="5" width="1" height="1" fill="#000"/><rect x="2" y="5" width="2" height="1" fill="#c0c0c0"/><rect x="4" y="5" width="4" height="1" fill="#808080"/><rect x="8" y="5" width="2" height="1" fill="#c0c0c0"/><rect x="10" y="5" width="1" height="1" fill="#dfdfdf"/><rect x="11" y="5" width="1" height="1" fill="#fff"/><rect x="0" y="6" width="1" height="1" fill="#808080"/><rect x="1" y="6" width="1" height="1" fill="#000"/><rect x="2" y="6" width="2" height="1" fill="#c0c0c0"/><rect x="4" y="6" width="4" height="1" fill="#808080"/><rect x="8" y="6" width="2" height="1" fill="#c0c0c0"/><rect x="10" y="6" width="1" height="1" fill="#dfdfdf"/><rect x="11" y="6" width="1" height="1" fill="#fff"/><rect x="0" y="7" width="1" height="1" fill="#808080"/><rect x="1" y="7" width="1" height="1" fill="#000"/><rect x="2" y="7" width="3" height="1" fill="#c0c0c0"/><rect x="5" y="7" width="2" height="1" fill="#808080"/><rect x="7" y="7" width="3" height="1" fill="#c0c0c0"/><rect x="10" y="7" width="1" height="1" fill="#dfdfdf"/><rect x="11" y="7" width="1" height="1" fill="#fff"/><rect x="1" y="8" width="1" height="1" fill="#808080"/><rect x="2" y="8" width="1" height="1" fill="#000"/><rect x="3" y="8" width="6" height="1" fill="#c0c0c0"/><rect x="9" y="8" width="1" height="1" fill="#dfdfdf"/><rect x="10" y="8" width="1" height="1" fill="#fff"/><rect x="1" y="9" width="1" height="1" fill="#808080"/><rect x="2" y="9" width="2" height="1" fill="#dfdfdf"/><rect x="4" y="9" width="4" height="1" fill="#c0c0c0"/><rect x="8" y="9" width="2" height="1" fill="#dfdfdf"/><rect x="10" y="9" width="1" height="1" fill="#fff"/><rect x="2" y="10" width="2" height="1" fill="#fff"/><rect x="4" y="10" width="4" height="1" fill="#dfdfdf"/><rect x="8" y="10" width="2" height="1" fill="#fff"/><rect x="4" y="11" width="4" height="1" fill="#fff"/></svg>
<svg style="left:516px;top:246px" width="12" height="12" shape-rendering="crispEdges"><rect x="4" y="0" width="4" height="1" fill="#808080"/><rect x="2" y="1" width="2" height="1" fill="#808080"/><rect x="4" y="1" width="4" height="1" fill="#000"/><rect x="8" y="1" width="2" height="1" fill="#808080"/><rect x="1" y="2" width="1" height="1" fill="#808080"/><rect x="2" y="2" width="2" height="1" fill="#000"/><rect x="4" y="2" width="4" height="1" fill="#c0c0c0"/><rect x="8" y="2" width="1" height="1" fill="#000"/><rect x="9" y="2" width="1" height="1" fill="#dfdfdf"/><rect x="10" y="2" width="1" height="1" fill="#fff"/><rect x="1" y="3" width="1" height="1" fill="#808080"/><rect x="2" y="3" width="1" height="1" fill="#000"/><rect x="3" y="3" width="6" height="1" fill="#c0c0c0"/><rect x="9" y="3" width="1" height="1" fill="#dfdfdf"/><rect x="10" y="3" width="1" height="1" fill="#fff"/><rect x="0" y="4" width="1" height="1" fill="#808080"/><rect x="1" y="4" width="1" height="1" fill="#000"/><rect x="2" y="4" width="8" height="1" fill="#c0c0c0"/><rect x="10" y="4" width="1" height="1" fill="#dfdfdf"/><rect x="11" y="4" width="1" height="1" fill="#fff"/><rect x="0" y="5" width="1" height="1" fill="#808080"/><rect x="1" y="5" width="1" height="1" fill="#000"/><rect x="2" y="5" width="8" height="1" fill="#c0c0c0"/><rect x="10" y="5" width="1" height="1" fill="#dfdfdf"/><rect x="11" y="5" width="1" height="1" fill="#fff"/><rect x="0" y="6" width="1" height="1" fill="#808080"/><rect x="1" y="6" width="1" height="1" fill="#000"/><rect x="2" y="6" width="8" height="1" fill="#c0c0c0"/><rect x="10" y="6" width="1" height="1" fill="#dfdfdf"/><rect x="11" y="6" width="1" height="1" fill="#fff"/><rect x="0" y="7" width="1" height="1" fill="#808080"/><rect x="1" y="7" width="1" height="1" fill="#000"/><rect x="2" y="7" width="8" height="1" fill="#c0c0c0"/><rect x="10" y="7" width="1" height="1" fill="#dfdfdf"/><rect x="11" y="7" width="1" height="1" fill="#fff"/><rect x="1" y="8" width="1" height="1" fill="#808080"/><rect x="2" y="8" width="1" height="1" fill="#000"/><rect x="3" y="8" width="6" height="1" fill="#c0c0c0"/><rect x="9" y="8" width="1" height="1" fill="#dfdfdf"/><rect x="10" y="8" width="1" height="1" fill="#fff"/><rect x="1" y="9" width="1" height="1" fill="#808080"/><rect x="2" y="9" width="2" height="1" fill="#dfdfdf"/><rect x="4" y="9" width="4" height="1" fill="#c0c0c0"/><rect x="8" y="9" width="2" height="1" fill="#dfdfdf"/><rect x="10" y="9" width="1" height="1" fill="#fff"/><rect x="2" y="10" width="2" height="1" fill="#fff"/><rect x="4" y="10" width="4" height="1" fill="#dfdfdf"/><rect x="8" y="10" width="2" height="1" fill="#fff"/><rect x="4" y="11" width="4" height="1" fill="#fff"/></svg>
<div style="left:428px;top:276px;width:205px;height:73px;background:#c0c0c0"></div><div style="left:428px;top:276px;width:204px;height:1px;background:#000"></div><div style="left:428px;top:276px;width:1px;height:72px;background:#000"></div><div style="left:428px;top:348px;width:205px;height:1px;background:#000"></div><div style="left:632px;top:276px;width:1px;height:73px;background:#000"></div><div style="left:429px;top:277px;width:202px;height:1px;background:#c0c0c0"></div><div style="left:429px;top:277px;width:1px;height:70px;background:#c0c0c0"></div><div style="left:429px;top:347px;width:203px;height:1px;background:#fff"></div><div style="left:631px;top:277px;width:1px;height:71px;background:#fff"></div><div style="left:431px;top:279px;width:198px;height:1px;background:#808080"></div><div style="left:431px;top:279px;width:1px;height:66px;background:#808080"></div><div style="left:431px;top:345px;width:199px;height:1px;background:#fff"></div><div style="left:629px;top:279px;width:1px;height:67px;background:#fff"></div><div style="left:428px;top:276px;width:1px;height:1px;background:#e8e8e8"></div><div style="left:632px;top:276px;width:1px;height:1px;background:#e8e8e8"></div><div style="left:428px;top:348px;width:1px;height:1px;background:#e8e8e8"></div><div style="left:632px;top:348px;width:1px;height:1px;background:#e8e8e8"></div>
<div style="left:468px;top:295px;width:147px;height:17px;background:#fff"></div><div style="left:468px;top:295px;width:146px;height:1px;background:#808080"></div><div style="left:468px;top:295px;width:1px;height:16px;background:#808080"></div><div style="left:468px;top:311px;width:147px;height:1px;background:#fff"></div><div style="left:614px;top:295px;width:1px;height:17px;background:#fff"></div><div style="left:469px;top:296px;width:144px;height:1px;background:#000"></div><div style="left:469px;top:296px;width:1px;height:14px;background:#000"></div><div style="left:469px;top:310px;width:145px;height:1px;background:#dfdfdf"></div><div style="left:613px;top:296px;width:1px;height:15px;background:#dfdfdf"></div>
<div style="left:437px;top:319px;width:184px;height:1px;background:#fff"></div><div style="left:437px;top:338px;width:184px;height:1px;background:#fff"></div><div style="left:437px;top:319px;width:1px;height:20px;background:#fff"></div><div style="left:620px;top:319px;width:1px;height:20px;background:#fff"></div><div style="left:436px;top:318px;width:184px;height:1px;background:#808080"></div><div style="left:436px;top:337px;width:184px;height:1px;background:#808080"></div><div style="left:436px;top:318px;width:1px;height:20px;background:#808080"></div><div style="left:619px;top:318px;width:1px;height:20px;background:#808080"></div>
<svg style="left:442px;top:324px" width="12" height="12" shape-rendering="crispEdges"><rect x="4" y="0" width="4" height="1" fill="#808080"/><rect x="2" y="1" width="2" height="1" fill="#808080"/><rect x="4" y="1" width="4" height="1" fill="#000"/><rect x="8" y="1" width="2" height="1" fill="#808080"/><rect x="1" y="2" width="1" height="1" fill="#808080"/><rect x="2" y="2" width="2" height="1" fill="#000"/><rect x="4" y="2" width="4" height="1" fill="#c0c0c0"/><rect x="8" y="2" width="1" height="1" fill="#000"/><rect x="9" y="2" width="1" height="1" fill="#dfdfdf"/><rect x="10" y="2" width="1" height="1" fill="#fff"/><rect x="1" y="3" width="1" height="1" fill="#808080"/><rect x="2" y="3" width="1" height="1" fill="#000"/><rect x="3" y="3" width="6" height="1" fill="#c0c0c0"/><rect x="9" y="3" width="1" height="1" fill="#dfdfdf"/><rect x="10" y="3" width="1" height="1" fill="#fff"/><rect x="0" y="4" width="1" height="1" fill="#808080"/><rect x="1" y="4" width="1" height="1" fill="#000"/><rect x="2" y="4" width="3" height="1" fill="#c0c0c0"/><rect x="5" y="4" width="2" height="1" fill="#808080"/><rect x="7" y="4" width="3" height="1" fill="#c0c0c0"/><rect x="10" y="4" width="1" height="1" fill="#dfdfdf"/><rect x="11" y="4" width="1" height="1" fill="#fff"/><rect x="0" y="5" width="1" height="1" fill="#808080"/><rect x="1" y="5" width="1" height="1" fill="#000"/><rect x="2" y="5" width="2" height="1" fill="#c0c0c0"/><rect x="4" y="5" width="4" height="1" fill="#808080"/><rect x="8" y="5" width="2" height="1" fill="#c0c0c0"/><rect x="10" y="5" width="1" height="1" fill="#dfdfdf"/><rect x="11" y="5" width="1" height="1" fill="#fff"/><rect x="0" y="6" width="1" height="1" fill="#808080"/><rect x="1" y="6" width="1" height="1" fill="#000"/><rect x="2" y="6" width="2" height="1" fill="#c0c0c0"/><rect x="4" y="6" width="4" height="1" fill="#808080"/><rect x="8" y="6" width="2" height="1" fill="#c0c0c0"/><rect x="10" y="6" width="1" height="1" fill="#dfdfdf"/><rect x="11" y="6" width="1" height="1" fill="#fff"/><rect x="0" y="7" width="1" height="1" fill="#808080"/><rect x="1" y="7" width="1" height="1" fill="#000"/><rect x="2" y="7" width="3" height="1" fill="#c0c0c0"/><rect x="5" y="7" width="2" height="1" fill="#808080"/><rect x="7" y="7" width="3" height="1" fill="#c0c0c0"/><rect x="10" y="7" width="1" height="1" fill="#dfdfdf"/><rect x="11" y="7" width="1" height="1" fill="#fff"/><rect x="1" y="8" width="1" height="1" fill="#808080"/><rect x="2" y="8" width="1" height="1" fill="#000"/><rect x="3" y="8" width="6" height="1" fill="#c0c0c0"/><rect x="9" y="8" width="1" height="1" fill="#dfdfdf"/><rect x="10" y="8" width="1" height="1" fill="#fff"/><rect x="1" y="9" width="1" height="1" fill="#808080"/><rect x="2" y="9" width="2" height="1" fill="#dfdfdf"/><rect x="4" y="9" width="4" height="1" fill="#c0c0c0"/><rect x="8" y="9" width="2" height="1" fill="#dfdfdf"/><rect x="10" y="9" width="1" height="1" fill="#fff"/><rect x="2" y="10" width="2" height="1" fill="#fff"/><rect x="4" y="10" width="4" height="1" fill="#dfdfdf"/><rect x="8" y="10" width="2" height="1" fill="#fff"/><rect x="4" y="11" width="4" height="1" fill="#fff"/></svg>
<svg style="left:515px;top:324px" width="12" height="12" shape-rendering="crispEdges"><rect x="4" y="0" width="4" height="1" fill="#808080"/><rect x="2" y="1" width="2" height="1" fill="#808080"/><rect x="4" y="1" width="4" height="1" fill="#000"/><rect x="8" y="1" width="2" height="1" fill="#808080"/><rect x="1" y="2" width="1" height="1" fill="#808080"/><rect x="2" y="2" width="2" height="1" fill="#000"/><rect x="4" y="2" width="4" height="1" fill="#c0c0c0"/><rect x="8" y="2" width="1" height="1" fill="#000"/><rect x="9" y="2" width="1" height="1" fill="#dfdfdf"/><rect x="10" y="2" width="1" height="1" fill="#fff"/><rect x="1" y="3" width="1" height="1" fill="#808080"/><rect x="2" y="3" width="1" height="1" fill="#000"/><rect x="3" y="3" width="6" height="1" fill="#c0c0c0"/><rect x="9" y="3" width="1" height="1" fill="#dfdfdf"/><rect x="10" y="3" width="1" height="1" fill="#fff"/><rect x="0" y="4" width="1" height="1" fill="#808080"/><rect x="1" y="4" width="1" height="1" fill="#000"/><rect x="2" y="4" width="8" height="1" fill="#c0c0c0"/><rect x="10" y="4" width="1" height="1" fill="#dfdfdf"/><rect x="11" y="4" width="1" height="1" fill="#fff"/><rect x="0" y="5" width="1" height="1" fill="#808080"/><rect x="1" y="5" width="1" height="1" fill="#000"/><rect x="2" y="5" width="8" height="1" fill="#c0c0c0"/><rect x="10" y="5" width="1" height="1" fill="#dfdfdf"/><rect x="11" y="5" width="1" height="1" fill="#fff"/><rect x="0" y="6" width="1" height="1" fill="#808080"/><rect x="1" y="6" width="1" height="1" fill="#000"/><rect x="2" y="6" width="8" height="1" fill="#c0c0c0"/><rect x="10" y="6" width="1" height="1" fill="#dfdfdf"/><rect x="11" y="6" width="1" height="1" fill="#fff"/><rect x="0" y="7" width="1" height="1" fill="#808080"/><rect x="1" y="7" width="1" height="1" fill="#000"/><rect x="2" y="7" width="8" height="1" fill="#c0c0c0"/><rect x="10" y="7" width="1" height="1" fill="#dfdfdf"/><rect x="11" y="7" width="1" height="1" fill="#fff"/><rect x="1" y="8" width="1" height="1" fill="#808080"/><rect x="2" y="8" width="1" height="1" fill="#000"/><rect x="3" y="8" width="6" height="1" fill="#c0c0c0"/><rect x="9" y="8" width="1" height="1" fill="#dfdfdf"/><rect x="10" y="8" width="1" height="1" fill="#fff"/><rect x="1" y="9" width="1" height="1" fill="#808080"/><rect x="2" y="9" width="2" height="1" fill="#dfdfdf"/><rect x="4" y="9" width="4" height="1" fill="#c0c0c0"/><rect x="8" y="9" width="2" height="1" fill="#dfdfdf"/><rect x="10" y="9" width="1" height="1" fill="#fff"/><rect x="2" y="10" width="2" height="1" fill="#fff"/><rect x="4" y="10" width="4" height="1" fill="#dfdfdf"/><rect x="8" y="10" width="2" height="1" fill="#fff"/><rect x="4" y="11" width="4" height="1" fill="#fff"/></svg>
<div style="left:428px;top:355px;width:205px;height:85px;background:#c0c0c0"></div><div style="left:428px;top:355px;width:204px;height:1px;background:#000"></div><div style="left:428px;top:355px;width:1px;height:84px;background:#000"></div><div style="left:428px;top:439px;width:205px;height:1px;background:#000"></div><div style="left:632px;top:355px;width:1px;height:85px;background:#000"></div><div style="left:429px;top:356px;width:202px;height:1px;background:#c0c0c0"></div><div style="left:429px;top:356px;width:1px;height:82px;background:#c0c0c0"></div><div style="left:429px;top:438px;width:203px;height:1px;background:#fff"></div><div style="left:631px;top:356px;width:1px;height:83px;background:#fff"></div><div style="left:431px;top:358px;width:198px;height:1px;background:#808080"></div><div style="left:431px;top:358px;width:1px;height:78px;background:#808080"></div><div style="left:431px;top:436px;width:199px;height:1px;background:#fff"></div><div style="left:629px;top:358px;width:1px;height:79px;background:#fff"></div><div style="left:428px;top:355px;width:1px;height:1px;background:#e8e8e8"></div><div style="left:632px;top:355px;width:1px;height:1px;background:#e8e8e8"></div><div style="left:428px;top:439px;width:1px;height:1px;background:#e8e8e8"></div><div style="left:632px;top:439px;width:1px;height:1px;background:#e8e8e8"></div>
<div style="left:433px;top:375px;width:196px;height:1px;background:#808080"></div>
<svg style="left:449px;top:382px" width="12" height="12" shape-rendering="crispEdges"><rect x="4" y="0" width="4" height="1" fill="#808080"/><rect x="2" y="1" width="2" height="1" fill="#808080"/><rect x="4" y="1" width="4" height="1" fill="#000"/><rect x="8" y="1" width="2" height="1" fill="#808080"/><rect x="1" y="2" width="1" height="1" fill="#808080"/><rect x="2" y="2" width="2" height="1" fill="#000"/><rect x="4" y="2" width="4" height="1" fill="#fff"/><rect x="8" y="2" width="1" height="1" fill="#000"/><rect x="9" y="2" width="1" height="1" fill="#dfdfdf"/><rect x="10" y="2" width="1" height="1" fill="#fff"/><rect x="1" y="3" width="1" height="1" fill="#808080"/><rect x="2" y="3" width="1" height="1" fill="#000"/><rect x="3" y="3" width="6" height="1" fill="#fff"/><rect x="9" y="3" width="1" height="1" fill="#dfdfdf"/><rect x="10" y="3" width="1" height="1" fill="#fff"/><rect x="0" y="4" width="1" height="1" fill="#808080"/><rect x="1" y="4" width="1" height="1" fill="#000"/><rect x="2" y="4" width="3" height="1" fill="#fff"/><rect x="5" y="4" width="2" height="1" fill="#000"/><rect x="7" y="4" width="3" height="1" fill="#fff"/><rect x="10" y="4" width="1" height="1" fill="#dfdfdf"/><rect x="11" y="4" width="1" height="1" fill="#fff"/><rect x="0" y="5" width="1" height="1" fill="#808080"/><rect x="1" y="5" width="1" height="1" fill="#000"/><rect x="2" y="5" width="2" height="1" fill="#fff"/><rect x="4" y="5" width="4" height="1" fill="#000"/><rect x="8" y="5" width="2" height="1" fill="#fff"/><rect x="10" y="5" width="1" height="1" fill="#dfdfdf"/><rect x="11" y="5" width="1" height="1" fill="#fff"/><rect x="0" y="6" width="1" height="1" fill="#808080"/><rect x="1" y="6" width="1" height="1" fill="#000"/><rect x="2" y="6" width="2" height="1" fill="#fff"/><rect x="4" y="6" width="4" height="1" fill="#000"/><rect x="8" y="6" width="2" height="1" fill="#fff"/><rect x="10" y="6" width="1" height="1" fill="#dfdfdf"/><rect x="11" y="6" width="1" height="1" fill="#fff"/><rect x="0" y="7" width="1" height="1" fill="#808080"/><rect x="1" y="7" width="1" height="1" fill="#000"/><rect x="2" y="7" width="3" height="1" fill="#fff"/><rect x="5" y="7" width="2" height="1" fill="#000"/><rect x="7" y="7" width="3" height="1" fill="#fff"/><rect x="10" y="7" width="1" height="1" fill="#dfdfdf"/><rect x="11" y="7" width="1" height="1" fill="#fff"/><rect x="1" y="8" width="1" height="1" fill="#808080"/><rect x="2" y="8" width="1" height="1" fill="#000"/><rect x="3" y="8" width="6" height="1" fill="#fff"/><rect x="9" y="8" width="1" height="1" fill="#dfdfdf"/><rect x="10" y="8" width="1" height="1" fill="#fff"/><rect x="1" y="9" width="1" height="1" fill="#808080"/><rect x="2" y="9" width="2" height="1" fill="#dfdfdf"/><rect x="4" y="9" width="4" height="1" fill="#fff"/><rect x="8" y="9" width="2" height="1" fill="#dfdfdf"/><rect x="10" y="9" width="1" height="1" fill="#fff"/><rect x="2" y="10" width="2" height="1" fill="#fff"/><rect x="4" y="10" width="4" height="1" fill="#dfdfdf"/><rect x="8" y="10" width="2" height="1" fill="#fff"/><rect x="4" y="11" width="4" height="1" fill="#fff"/></svg>
<svg style="left:449px;top:399px" width="12" height="12" shape-rendering="crispEdges"><rect x="4" y="0" width="4" height="1" fill="#808080"/><rect x="2" y="1" width="2" height="1" fill="#808080"/><rect x="4" y="1" width="4" height="1" fill="#000"/><rect x="8" y="1" width="2" height="1" fill="#808080"/><rect x="1" y="2" width="1" height="1" fill="#808080"/><rect x="2" y="2" width="2" height="1" fill="#000"/><rect x="4" y="2" width="4" height="1" fill="#fff"/><rect x="8" y="2" width="1" height="1" fill="#000"/><rect x="9" y="2" width="1" height="1" fill="#dfdfdf"/><rect x="10" y="2" width="1" height="1" fill="#fff"/><rect x="1" y="3" width="1" height="1" fill="#808080"/><rect x="2" y="3" width="1" height="1" fill="#000"/><rect x="3" y="3" width="6" height="1" fill="#fff"/><rect x="9" y="3" width="1" height="1" fill="#dfdfdf"/><rect x="10" y="3" width="1" height="1" fill="#fff"/><rect x="0" y="4" width="1" height="1" fill="#808080"/><rect x="1" y="4" width="1" height="1" fill="#000"/><rect x="2" y="4" width="8" height="1" fill="#fff"/><rect x="10" y="4" width="1" height="1" fill="#dfdfdf"/><rect x="11" y="4" width="1" height="1" fill="#fff"/><rect x="0" y="5" width="1" height="1" fill="#808080"/><rect x="1" y="5" width="1" height="1" fill="#000"/><rect x="2" y="5" width="8" height="1" fill="#fff"/><rect x="10" y="5" width="1" height="1" fill="#dfdfdf"/><rect x="11" y="5" width="1" height="1" fill="#fff"/><rect x="0" y="6" width="1" height="1" fill="#808080"/><rect x="1" y="6" width="1" height="1" fill="#000"/><rect x="2" y="6" width="8" height="1" fill="#fff"/><rect x="10" y="6" width="1" height="1" fill="#dfdfdf"/><rect x="11" y="6" width="1" height="1" fill="#fff"/><rect x="0" y="7" width="1" height="1" fill="#808080"/><rect x="1" y="7" width="1" height="1" fill="#000"/><rect x="2" y="7" width="8" height="1" fill="#fff"/><rect x="10" y="7" width="1" height="1" fill="#dfdfdf"/><rect x="11" y="7" width="1" height="1" fill="#fff"/><rect x="1" y="8" width="1" height="1" fill="#808080"/><rect x="2" y="8" width="1" height="1" fill="#000"/><rect x="3" y="8" width="6" height="1" fill="#fff"/><rect x="9" y="8" width="1" height="1" fill="#dfdfdf"/><rect x="10" y="8" width="1" height="1" fill="#fff"/><rect x="1" y="9" width="1" height="1" fill="#808080"/><rect x="2" y="9" width="2" height="1" fill="#dfdfdf"/><rect x="4" y="9" width="4" height="1" fill="#fff"/><rect x="8" y="9" width="2" height="1" fill="#dfdfdf"/><rect x="10" y="9" width="1" height="1" fill="#fff"/><rect x="2" y="10" width="2" height="1" fill="#fff"/><rect x="4" y="10" width="4" height="1" fill="#dfdfdf"/><rect x="8" y="10" width="2" height="1" fill="#fff"/><rect x="4" y="11" width="4" height="1" fill="#fff"/></svg>
<svg style="left:449px;top:416px" width="12" height="12" shape-rendering="crispEdges"><rect x="4" y="0" width="4" height="1" fill="#808080"/><rect x="2" y="1" width="2" height="1" fill="#808080"/><rect x="4" y="1" width="4" height="1" fill="#000"/><rect x="8" y="1" width="2" height="1" fill="#808080"/><rect x="1" y="2" width="1" height="1" fill="#808080"/><rect x="2" y="2" width="2" height="1" fill="#000"/><rect x="4" y="2" width="4" height="1" fill="#fff"/><rect x="8" y="2" width="1" height="1" fill="#000"/><rect x="9" y="2" width="1" height="1" fill="#dfdfdf"/><rect x="10" y="2" width="1" height="1" fill="#fff"/><rect x="1" y="3" width="1" height="1" fill="#808080"/><rect x="2" y="3" width="1" height="1" fill="#000"/><rect x="3" y="3" width="6" height="1" fill="#fff"/><rect x="9" y="3" width="1" height="1" fill="#dfdfdf"/><rect x="10" y="3" width="1" height="1" fill="#fff"/><rect x="0" y="4" width="1" height="1" fill="#808080"/><rect x="1" y="4" width="1" height="1" fill="#000"/><rect x="2" y="4" width="8" height="1" fill="#fff"/><rect x="10" y="4" width="1" height="1" fill="#dfdfdf"/><rect x="11" y="4" width="1" height="1" fill="#fff"/><rect x="0" y="5" width="1" height="1" fill="#808080"/><rect x="1" y="5" width="1" height="1" fill="#000"/><rect x="2" y="5" width="8" height="1" fill="#fff"/><rect x="10" y="5" width="1" height="1" fill="#dfdfdf"/><rect x="11" y="5" width="1" height="1" fill="#fff"/><rect x="0" y="6" width="1" height="1" fill="#808080"/><rect x="1" y="6" width="1" height="1" fill="#000"/><rect x="2" y="6" width="8" height="1" fill="#fff"/><rect x="10" y="6" width="1" height="1" fill="#dfdfdf"/><rect x="11" y="6" width="1" height="1" fill="#fff"/><rect x="0" y="7" width="1" height="1" fill="#808080"/><rect x="1" y="7" width="1" height="1" fill="#000"/><rect x="2" y="7" width="8" height="1" fill="#fff"/><rect x="10" y="7" width="1" height="1" fill="#dfdfdf"/><rect x="11" y="7" width="1" height="1" fill="#fff"/><rect x="1" y="8" width="1" height="1" fill="#808080"/><rect x="2" y="8" width="1" height="1" fill="#000"/><rect x="3" y="8" width="6" height="1" fill="#fff"/><rect x="9" y="8" width="1" height="1" fill="#dfdfdf"/><rect x="10" y="8" width="1" height="1" fill="#fff"/><rect x="1" y="9" width="1" height="1" fill="#808080"/><rect x="2" y="9" width="2" height="1" fill="#dfdfdf"/><rect x="4" y="9" width="4" height="1" fill="#fff"/><rect x="8" y="9" width="2" height="1" fill="#dfdfdf"/><rect x="10" y="9" width="1" height="1" fill="#fff"/><rect x="2" y="10" width="2" height="1" fill="#fff"/><rect x="4" y="10" width="4" height="1" fill="#dfdfdf"/><rect x="8" y="10" width="2" height="1" fill="#fff"/><rect x="4" y="11" width="4" height="1" fill="#fff"/></svg>
<div style="left:31.13px;top:74.00px;font:normal 12px/13px 'Liberation Sans', sans-serif;color:#000;white-space:nowrap;transform:scaleX(0.8738);transform-origin:0 0;">Dwelling Square Ft.</div>
<div style="left:22.00px;top:97.00px;font:normal 12px/13px 'Liberation Sans', sans-serif;color:#000;white-space:nowrap;transform:scaleX(0.8661);transform-origin:0 0;">Qty. Small App. Ccts.</div>
<div style="left:38.00px;top:121.00px;font:normal 12px/13px 'Liberation Sans', sans-serif;color:#000;white-space:nowrap;transform:scaleX(0.8673);transform-origin:0 0;">Qty. Laundry Ccts.</div>
<div style="left:128.00px;top:147.00px;font:normal 12px/13px 'Liberation Sans', sans-serif;color:#000;white-space:nowrap;transform:scaleX(0.8800);transform-origin:0 0;">VoltAmps</div>
<div style="left:56.10px;top:163.00px;font:normal 12px/13px 'Liberation Sans', sans-serif;color:#000;white-space:nowrap;transform:scaleX(0.9000);transform-origin:0 0;">Heating Load</div>
<div style="left:58.12px;top:187.00px;font:normal 12px/13px 'Liberation Sans', sans-serif;color:#000;white-space:nowrap;transform:scaleX(0.8841);transform-origin:0 0;">Cooling Load</div>
<div style="left:80.09px;top:219.00px;font:normal 12px/13px 'Liberation Sans', sans-serif;color:#000;white-space:nowrap;transform:scaleX(0.9070);transform-origin:0 0;">Cooktop</div>
<div style="left:88.09px;top:243.00px;font:normal 12px/13px 'Liberation Sans', sans-serif;color:#000;white-space:nowrap;transform:scaleX(0.9118);transform-origin:0 0;">Range</div>
<div style="left:70.00px;top:267.00px;font:normal 12px/13px 'Liberation Sans', sans-serif;color:#000;white-space:nowrap;transform:scaleX(0.9259);transform-origin:0 0;">Wall Oven</div>
<div style="left:95.14px;top:301.00px;font:normal 12px/13px 'Liberation Sans', sans-serif;color:#000;white-space:nowrap;transform:scaleX(0.8571);transform-origin:0 0;">Dryer</div>
<div style="left:60.00px;top:325.00px;font:normal 12px/13px 'Liberation Sans', sans-serif;color:#000;white-space:nowrap;transform:scaleX(0.9014);transform-origin:0 0;">Water Heater</div>
<div style="left:326.00px;top:91.00px;font:normal 12px/13px 'Liberation Sans', sans-serif;color:#000;white-space:nowrap;transform:scaleX(0.8800);transform-origin:0 0;">VoltAmps</div>
<div style="left:280.00px;top:109.00px;font:normal 12px/13px 'Liberation Sans', sans-serif;color:#000;white-space:nowrap;transform:scaleX(0.8936);transform-origin:0 0;">Attic Fan</div>
<div style="left:271.14px;top:131.00px;font:normal 12px/13px 'Liberation Sans', sans-serif;color:#000;white-space:nowrap;transform:scaleX(0.8621);transform-origin:0 0;">Compactor</div>
<div style="left:267.13px;top:155.00px;font:normal 12px/13px 'Liberation Sans', sans-serif;color:#000;white-space:nowrap;transform:scaleX(0.8710);transform-origin:0 0;">Dishwasher</div>
<div style="left:282.11px;top:179.00px;font:normal 12px/13px 'Liberation Sans', sans-serif;color:#000;white-space:nowrap;transform:scaleX(0.8864);transform-origin:0 0;">Disposal</div>
<div style="left:287.00px;top:203.00px;font:normal 12px/13px 'Liberation Sans', sans-serif;color:#000;white-space:nowrap;transform:scaleX(0.8974);transform-origin:0 0;">Jacuzzi</div>
<div style="left:265.14px;top:227.00px;font:normal 12px/13px 'Liberation Sans', sans-serif;color:#000;white-space:nowrap;transform:scaleX(0.8615);transform-origin:0 0;">Sump Pump</div>
<div style="left:271.00px;top:251.00px;font:normal 12px/13px 'Liberation Sans', sans-serif;color:#000;white-space:nowrap;transform:scaleX(0.8947);transform-origin:0 0;">Well Pump</div>
<div style="left:231.00px;top:277.00px;font:normal 12px/13px 'Liberation Sans', sans-serif;color:#000;white-space:nowrap;transform:scaleX(0.8725);transform-origin:0 0;">Other Appliance #1</div>
<div style="left:231.00px;top:301.00px;font:normal 12px/13px 'Liberation Sans', sans-serif;color:#000;white-space:nowrap;transform:scaleX(0.8922);transform-origin:0 0;">Other Appliance #2</div>
<div style="left:230.00px;top:325.00px;font:normal 12px/13px 'Liberation Sans', sans-serif;color:#000;white-space:nowrap;transform:scaleX(0.8762);transform-origin:0 0;">Other Lighting Load</div>
<div style="left:27.08px;top:356.00px;font:normal 12px/13px 'Liberation Sans', sans-serif;color:#000;white-space:nowrap;transform:scaleX(0.9245);transform-origin:0 0;">Heat Type</div>
<div style="left:45.12px;top:415.00px;font:normal 12px/13px 'Liberation Sans', sans-serif;color:#000;white-space:nowrap;transform:scaleX(0.8774);transform-origin:0 0;">Net Computed Load</div>
<div style="left:222.00px;top:421.00px;font:normal 12px/13px 'Liberation Sans', sans-serif;color:#000;white-space:nowrap;transform:scaleX(0.9333);transform-origin:0 0;">VA</div>
<div style="left:341.00px;top:417.00px;font:normal 12px/13px 'Liberation Sans', sans-serif;color:#000;white-space:nowrap;transform:scaleX(0.8542);transform-origin:0 0;">Amperes</div>
<div style="left:484.00px;top:78.00px;font:normal 12px/13px 'Liberation Sans', sans-serif;color:#000;white-space:nowrap;transform:scaleX(0.8725);transform-origin:0 0;">Other Appliance #1</div>
<div style="left:439.13px;top:92.00px;font:normal 12px/13px 'Liberation Sans', sans-serif;color:#000;white-space:nowrap;transform:scaleX(0.8710);transform-origin:0 0;">Name</div>
<div style="left:471.15px;top:122.00px;font:normal 12px/13px 'Liberation Sans', sans-serif;color:#808080;white-space:nowrap;text-shadow:1px 1px 0 #fff;transform:scaleX(0.8500);transform-origin:0 0;">Motor</div>
<div style="left:533.12px;top:122.00px;font:normal 12px/13px 'Liberation Sans', sans-serif;color:#808080;white-space:nowrap;text-shadow:1px 1px 0 #fff;transform:scaleX(0.8846);transform-origin:0 0;">NonMotor</div>
<div style="left:471.16px;top:146.00px;font:normal 12px/13px 'Liberation Sans', sans-serif;color:#808080;white-space:nowrap;text-shadow:1px 1px 0 #fff;transform:scaleX(0.8393);transform-origin:0 0;">Fixed</div>
<div style="left:533.12px;top:146.00px;font:normal 12px/13px 'Liberation Sans', sans-serif;color:#808080;white-space:nowrap;text-shadow:1px 1px 0 #fff;transform:scaleX(0.8837);transform-origin:0 0;">Portable</div>
<div style="left:484.00px;top:179.00px;font:normal 12px/13px 'Liberation Sans', sans-serif;color:#000;white-space:nowrap;transform:scaleX(0.8922);transform-origin:0 0;">Other Appliance #2</div>
<div style="left:435.13px;top:191.00px;font:normal 12px/13px 'Liberation Sans', sans-serif;color:#000;white-space:nowrap;transform:scaleX(0.8710);transform-origin:0 0;">Name</div>
<div style="left:471.15px;top:223.00px;font:normal 12px/13px 'Liberation Sans', sans-serif;color:#808080;white-space:nowrap;text-shadow:1px 1px 0 #fff;transform:scaleX(0.8500);transform-origin:0 0;">Motor</div>
<div style="left:533.12px;top:223.00px;font:normal 12px/13px 'Liberation Sans', sans-serif;color:#808080;white-space:nowrap;text-shadow:1px 1px 0 #fff;transform:scaleX(0.8846);transform-origin:0 0;">NonMotor</div>
<div style="left:471.16px;top:247.00px;font:normal 12px/13px 'Liberation Sans', sans-serif;color:#808080;white-space:nowrap;text-shadow:1px 1px 0 #fff;transform:scaleX(0.8393);transform-origin:0 0;">Fixed</div>
<div style="left:533.12px;top:247.00px;font:normal 12px/13px 'Liberation Sans', sans-serif;color:#808080;white-space:nowrap;text-shadow:1px 1px 0 #fff;transform:scaleX(0.8837);transform-origin:0 0;">Portable</div>
<div style="left:498.00px;top:281.00px;font:normal 12px/13px 'Liberation Sans', sans-serif;color:#000;white-space:nowrap;transform:scaleX(0.8667);transform-origin:0 0;">Other Lighting</div>
<div style="left:436.13px;top:296.00px;font:normal 12px/13px 'Liberation Sans', sans-serif;color:#000;white-space:nowrap;transform:scaleX(0.8710);transform-origin:0 0;">Name</div>
<div style="left:459.12px;top:325.00px;font:normal 12px/13px 'Liberation Sans', sans-serif;color:#808080;white-space:nowrap;text-shadow:1px 1px 0 #fff;transform:scaleX(0.8814);transform-origin:0 0;">Continuous</div>
<div style="left:532.11px;top:325.00px;font:normal 12px/13px 'Liberation Sans', sans-serif;color:#808080;white-space:nowrap;text-shadow:1px 1px 0 #fff;transform:scaleX(0.8889);transform-origin:0 0;">NonContinuous</div>
<div style="left:472.12px;top:360.00px;font:normal 12px/13px 'Liberation Sans', sans-serif;color:#000;white-space:nowrap;transform:scaleX(0.8846);transform-origin:0 0;">NEC Calculation Method</div>
<div style="left:466.11px;top:382.00px;font:normal 12px/13px 'Liberation Sans', sans-serif;color:#000;white-space:nowrap;transform:scaleX(0.8936);transform-origin:0 0;">Standard</div>
<div style="left:467.00px;top:399.00px;font:normal 12px/13px 'Liberation Sans', sans-serif;color:#000;white-space:nowrap;transform:scaleX(0.8636);transform-origin:0 0;">Optional</div>
<div style="left:466.00px;top:416.00px;font:normal 12px/13px 'Liberation Sans', sans-serif;color:#000;white-space:nowrap;transform:scaleX(0.8800);transform-origin:0 0;">Addition to Existing Dwelling</div>
<div style="left:21.00px;top:3.00px;font:bold 12px/13px 'Liberation Sans', sans-serif;color:#fff;white-space:nowrap;transform:scaleX(0.9646);transform-origin:0 0;">OneFamily Dwelling</div>
<div style="left:6.17px;top:22.00px;font:normal 12px/13px 'Liberation Sans', sans-serif;color:#000;white-space:nowrap;transform:scaleX(0.8333);transform-origin:0 0;">File</div>
<div style="left:33.04px;top:22.00px;font:normal 12px/13px 'Liberation Sans', sans-serif;color:#000;white-space:nowrap;transform:scaleX(0.9565);transform-origin:0 0;">Help</div>
</body></html>
